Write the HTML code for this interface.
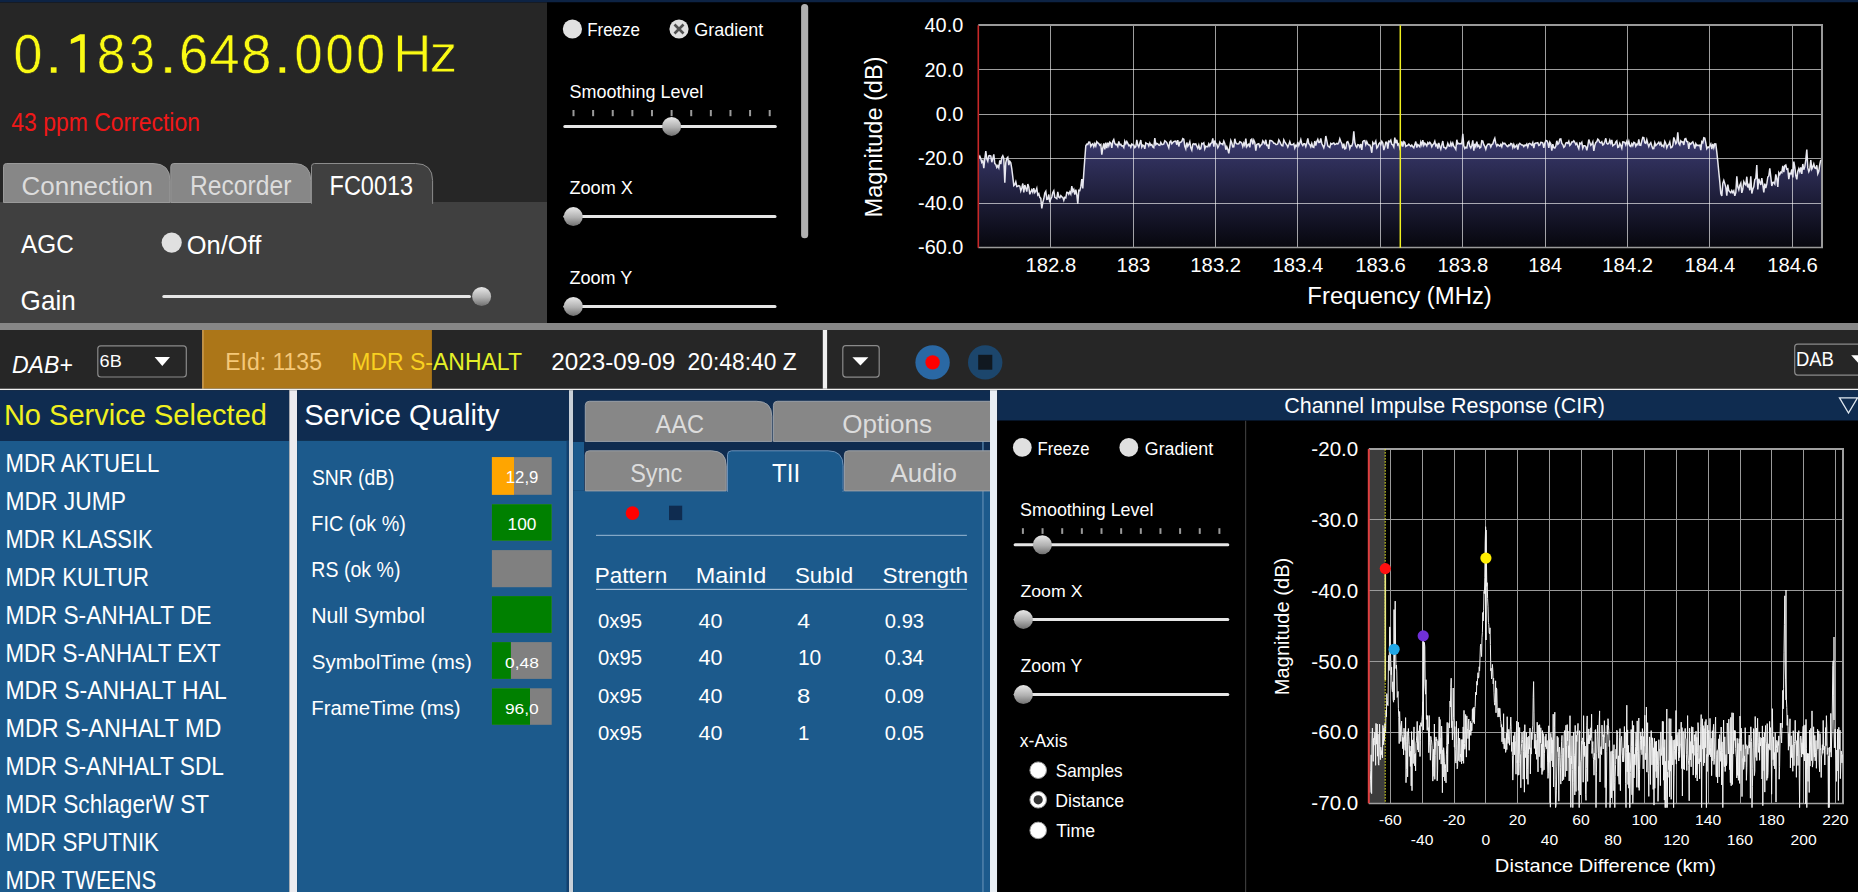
<!DOCTYPE html>
<html><head><meta charset="utf-8"><style>
html,body{margin:0;padding:0;background:#000;overflow:hidden}
svg{display:block;font-family:"Liberation Sans",sans-serif}
</style></head><body>
<svg width="1858" height="892" viewBox="0 0 1858 892">
<defs>
<linearGradient id="thumbg" x1="0" y1="0" x2="0" y2="1">
<stop offset="0" stop-color="#e8e8e8"/><stop offset="0.55" stop-color="#b0b0b0"/><stop offset="1" stop-color="#707070"/>
</linearGradient>
<linearGradient id="specg" gradientUnits="userSpaceOnUse" x1="0" y1="130" x2="0" y2="247">
<stop offset="0" stop-color="#3e3e76"/><stop offset="1" stop-color="#07070e"/>
</linearGradient>
<clipPath id="orclip"><rect x="200" y="330" width="231.9" height="60"/></clipPath>
<clipPath id="orclip2"><rect x="431.9" y="330" width="200" height="60"/></clipPath>
<clipPath id="tabclip"><rect x="573" y="390" width="417" height="200"/></clipPath>
</defs>
<rect x="0.00" y="0.00" width="1858.00" height="892.00" fill="#000000" />
<rect x="0.00" y="0.00" width="1858.00" height="2.50" fill="#0d2344" />
<rect x="0.00" y="2.50" width="547.00" height="199.50" fill="#262626" />
<rect x="0.00" y="202.00" width="547.00" height="121.00" fill="#404040" />
<path d="M3.5,202.5 L3.5,166.5 Q3.5,163.5 6.5,163.5 L153,163.5 Q170,163.5 170,180.5 L170,202.5 Z" fill="#878787" stroke="#9a9a9a" stroke-width="1" />
<path d="M170.8,202.5 L170.8,166.5 Q170.8,163.5 173.8,163.5 L293.8,163.5 Q310.8,163.5 310.8,180.5 L310.8,202.5 Z" fill="#878787" stroke="#9a9a9a" stroke-width="1" />
<path d="M311.5,203.5 L311.5,166.5 Q311.5,163.5 314.5,163.5 L415.6,163.5 Q432.6,163.5 432.6,180.5 L432.6,203.5 Z" fill="#404040" stroke="#8c8c8c" stroke-width="1" />
<rect x="312.00" y="201.50" width="120.10" height="3.50" fill="#404040" />
<rect x="547.00" y="2.50" width="1311.00" height="320.50" fill="#000000" />
<rect x="0.00" y="323.00" width="1858.00" height="7.00" fill="#878787" />
<rect x="0.00" y="330.00" width="1858.00" height="58.70" fill="#262626" />
<rect x="202.30" y="330.00" width="229.60" height="58.70" fill="#ac7618" />
<rect x="202.30" y="330.00" width="1.20" height="58.70" fill="#d8a860" />
<rect x="0.00" y="388.70" width="1858.00" height="1.50" fill="#f0f0f0" />
<rect x="0.00" y="390.20" width="289.30" height="50.80" fill="#0f2c50" />
<rect x="0.00" y="441.00" width="289.30" height="451.00" fill="#1c5a8c" />
<rect x="289.30" y="390.20" width="7.80" height="501.80" fill="#ececf0" />
<rect x="297.10" y="390.20" width="271.90" height="50.40" fill="#0f2c50" />
<rect x="297.10" y="440.60" width="271.90" height="451.40" fill="#1c5a8c" />
<rect x="566.50" y="440.60" width="2.50" height="451.40" fill="#12406e" />
<rect x="569.00" y="390.20" width="4.20" height="501.80" fill="#c8d0d8" />
<rect x="573.20" y="390.20" width="416.80" height="501.80" fill="#0f2c50" />
<rect x="573.20" y="490.70" width="416.80" height="401.30" fill="#1c5a8c" />
<rect x="573.20" y="442.00" width="10.80" height="48.70" fill="#1c5a8c" />
<rect x="982.30" y="440.00" width="1.30" height="452.00" fill="#5a88b0" />
<rect x="990.00" y="390.20" width="7.20" height="501.80" fill="#e8eef4" />
<rect x="997.20" y="390.20" width="860.80" height="30.50" fill="#0f2c50" />
<rect x="997.20" y="420.70" width="860.80" height="471.30" fill="#000000" />
<rect x="1245.00" y="420.70" width="1.20" height="471.30" fill="#3a3a3a" />
<path d="M80.1,34.2 L84.8,34.2 L84.8,72.6 L80.1,72.6 L80.1,40.6 L70.8,43.9 L70.8,39.4 Z" fill="#fafa14" stroke="none" stroke-width="1" />
<text stroke="#262626" stroke-width="0.55" x="13.43" y="72.90" font-size="55.60" fill="#fafa14" textLength="28.85" lengthAdjust="spacingAndGlyphs">0</text>
<text stroke="#262626" stroke-width="0.55" x="44.28" y="72.90" font-size="55.60" fill="#fafa14" textLength="18.89" lengthAdjust="spacingAndGlyphs">.</text>
<text stroke="#262626" stroke-width="0.55" x="96.84" y="72.90" font-size="55.60" fill="#fafa14" textLength="28.63" lengthAdjust="spacingAndGlyphs">8</text>
<text stroke="#262626" stroke-width="0.55" x="129.37" y="72.90" font-size="55.60" fill="#fafa14" textLength="25.44" lengthAdjust="spacingAndGlyphs">3</text>
<text stroke="#262626" stroke-width="0.55" x="158.77" y="72.90" font-size="55.60" fill="#fafa14" textLength="18.61" lengthAdjust="spacingAndGlyphs">.</text>
<text stroke="#262626" stroke-width="0.55" x="178.97" y="72.90" font-size="55.60" fill="#fafa14" textLength="29.26" lengthAdjust="spacingAndGlyphs">6</text>
<text stroke="#262626" stroke-width="0.55" x="209.42" y="72.90" font-size="55.60" fill="#fafa14" textLength="30.09" lengthAdjust="spacingAndGlyphs">4</text>
<text stroke="#262626" stroke-width="0.55" x="241.23" y="72.90" font-size="55.60" fill="#fafa14" textLength="30.17" lengthAdjust="spacingAndGlyphs">8</text>
<text stroke="#262626" stroke-width="0.55" x="272.97" y="72.90" font-size="55.60" fill="#fafa14" textLength="18.61" lengthAdjust="spacingAndGlyphs">.</text>
<text stroke="#262626" stroke-width="0.55" x="294.48" y="72.90" font-size="55.60" fill="#fafa14" textLength="28.04" lengthAdjust="spacingAndGlyphs">0</text>
<text stroke="#262626" stroke-width="0.55" x="325.38" y="72.90" font-size="55.60" fill="#fafa14" textLength="28.15" lengthAdjust="spacingAndGlyphs">0</text>
<text stroke="#262626" stroke-width="0.55" x="356.32" y="72.90" font-size="55.60" fill="#fafa14" textLength="28.85" lengthAdjust="spacingAndGlyphs">0</text>
<text stroke="#262626" stroke-width="0.8" x="393.17" y="72.20" font-size="54.20" fill="#fafa14" textLength="38.17" lengthAdjust="spacingAndGlyphs">H</text>
<text stroke="#262626" stroke-width="0.8" x="429.47" y="72.20" font-size="54.30" fill="#fafa14" textLength="27.93" lengthAdjust="spacingAndGlyphs">z</text>
<text x="11.24" y="131.40" font-size="24.93" fill="#f01818" textLength="188.76" lengthAdjust="spacingAndGlyphs">43 ppm Correction</text>
<text x="21.50" y="195.00" font-size="25.94" fill="#dcdcdc" textLength="131.38" lengthAdjust="spacingAndGlyphs">Connection</text>
<text x="190.03" y="195.00" font-size="26.81" fill="#dcdcdc" textLength="101.38" lengthAdjust="spacingAndGlyphs">Recorder</text>
<text x="329.52" y="195.00" font-size="26.81" fill="#ffffff" textLength="83.70" lengthAdjust="spacingAndGlyphs">FC0013</text>
<text x="21.10" y="252.90" font-size="26.67" fill="#ffffff" textLength="52.64" lengthAdjust="spacingAndGlyphs">AGC</text>
<circle cx="171.70" cy="242.60" r="10.10" fill="#e0e0e0" />
<text x="186.83" y="254.00" font-size="25.94" fill="#ffffff" textLength="74.50" lengthAdjust="spacingAndGlyphs">On/Off</text>
<text x="20.59" y="310.20" font-size="27.10" fill="#ffffff" textLength="55.13" lengthAdjust="spacingAndGlyphs">Gain</text>
<rect x="162.30" y="295.00" width="308.70" height="3.00" fill="#e6e6e6" rx="1.5"/>
<circle cx="481.60" cy="296.50" r="9.50" fill="url(#thumbg)" />
<circle cx="572.40" cy="29.00" r="9.60" fill="#e0e0e0" />
<text x="587.14" y="36.10" font-size="18.70" fill="#ffffff" textLength="52.77" lengthAdjust="spacingAndGlyphs">Freeze</text>
<circle cx="679.00" cy="29.00" r="9.60" fill="#e0e0e0" />
<path d="M674.5,24.5 L683.5,33.5 M683.5,24.5 L674.5,33.5" fill="none" stroke="#505050" stroke-width="2.6" />
<text x="694.30" y="36.10" font-size="18.70" fill="#ffffff" textLength="68.99" lengthAdjust="spacingAndGlyphs">Gradient</text>
<rect x="801.10" y="3.90" width="7.10" height="234.30" fill="#b0b0b0" rx="3.5"/>
<text x="569.50" y="98.10" font-size="18.26" fill="#ffffff" textLength="133.85" lengthAdjust="spacingAndGlyphs">Smoothing Level</text>
<rect x="563.30" y="124.90" width="213.50" height="3.00" fill="#e6e6e6" rx="1.5"/>
<rect x="572.50" y="110.00" width="2.00" height="6.20" fill="#9a9a9a" />
<rect x="592.12" y="110.00" width="2.00" height="6.20" fill="#9a9a9a" />
<rect x="611.74" y="110.00" width="2.00" height="6.20" fill="#9a9a9a" />
<rect x="631.36" y="110.00" width="2.00" height="6.20" fill="#9a9a9a" />
<rect x="650.98" y="110.00" width="2.00" height="6.20" fill="#9a9a9a" />
<rect x="670.60" y="110.00" width="2.00" height="6.20" fill="#9a9a9a" />
<rect x="690.22" y="110.00" width="2.00" height="6.20" fill="#9a9a9a" />
<rect x="709.84" y="110.00" width="2.00" height="6.20" fill="#9a9a9a" />
<rect x="729.46" y="110.00" width="2.00" height="6.20" fill="#9a9a9a" />
<rect x="749.08" y="110.00" width="2.00" height="6.20" fill="#9a9a9a" />
<rect x="768.70" y="110.00" width="2.00" height="6.20" fill="#9a9a9a" />
<circle cx="671.60" cy="126.40" r="9.50" fill="url(#thumbg)" />
<text x="569.46" y="193.90" font-size="18.26" fill="#ffffff" textLength="63.40" lengthAdjust="spacingAndGlyphs">Zoom X</text>
<rect x="563.30" y="215.10" width="213.20" height="3.00" fill="#e6e6e6" rx="1.5"/>
<circle cx="573.30" cy="216.60" r="9.50" fill="url(#thumbg)" />
<text x="569.46" y="283.90" font-size="17.97" fill="#ffffff" textLength="62.95" lengthAdjust="spacingAndGlyphs">Zoom Y</text>
<rect x="563.30" y="304.90" width="213.20" height="3.00" fill="#e6e6e6" rx="1.5"/>
<circle cx="573.30" cy="306.40" r="9.50" fill="url(#thumbg)" />
<path d="M978.3,247.8 L978.8,157.7 979.8,156.2 980.8,158.8 981.8,162.3 982.8,160.7 983.8,168.2 984.8,158.8 985.8,151.0 986.8,158.9 987.8,161.2 988.8,155.8 989.8,155.5 990.8,156.0 991.8,162.2 992.8,158.6 993.8,154.3 994.8,163.7 995.8,164.5 996.8,167.4 997.8,165.7 998.8,167.9 999.8,160.4 1000.8,164.1 1001.8,157.5 1002.8,155.7 1003.8,158.5 1004.8,182.8 1005.8,162.5 1006.8,158.4 1007.8,157.2 1008.8,165.1 1009.8,161.4 1010.8,162.9 1011.8,168.9 1012.8,177.0 1013.8,185.7 1014.8,184.7 1015.8,181.8 1016.8,186.5 1017.8,186.3 1018.8,185.7 1019.8,186.2 1020.8,190.9 1021.8,187.9 1022.8,183.5 1023.8,192.5 1024.8,185.0 1025.8,188.3 1026.8,191.6 1027.8,184.0 1028.8,186.9 1029.8,194.3 1030.8,191.7 1031.8,189.7 1032.8,192.3 1033.8,188.2 1034.8,192.5 1035.8,190.9 1036.8,188.3 1037.8,195.0 1038.8,193.7 1039.8,197.4 1040.8,198.4 1041.8,208.5 1042.8,202.4 1043.8,198.8 1044.8,193.1 1045.8,191.4 1046.8,199.4 1047.8,199.2 1048.8,194.5 1049.8,202.3 1050.8,198.9 1051.8,197.0 1052.8,192.5 1053.8,190.7 1054.8,197.3 1055.8,198.0 1056.8,198.7 1057.8,191.9 1058.8,197.1 1059.8,197.8 1060.8,195.7 1061.8,196.8 1062.8,197.3 1063.8,200.3 1064.8,197.3 1065.8,197.9 1066.8,192.3 1067.8,192.4 1068.8,194.2 1069.8,191.8 1070.8,194.0 1071.8,186.2 1072.8,191.4 1073.8,189.5 1074.8,194.5 1075.8,189.7 1076.8,194.7 1077.8,203.8 1078.8,190.3 1079.8,190.6 1080.8,186.9 1081.8,179.0 1082.8,188.4 1083.8,172.7 1084.8,158.8 1085.8,145.8 1086.8,144.1 1087.8,144.5 1088.8,142.1 1089.8,142.2 1090.8,146.4 1091.8,144.6 1092.8,143.8 1093.8,146.7 1094.8,143.7 1095.8,146.0 1096.8,141.7 1097.8,142.9 1098.8,143.6 1099.8,145.4 1100.8,144.5 1101.8,154.6 1102.8,147.8 1103.8,143.5 1104.8,149.4 1105.8,142.6 1106.8,148.1 1107.8,142.7 1108.8,145.8 1109.8,142.2 1110.8,143.2 1111.8,147.9 1112.8,141.3 1113.8,139.5 1114.8,143.4 1115.8,144.6 1116.8,144.4 1117.8,146.5 1118.8,141.4 1119.8,144.8 1120.8,144.3 1121.8,146.0 1122.8,145.9 1123.8,147.6 1124.8,141.2 1125.8,143.7 1126.8,141.4 1127.8,143.4 1128.8,145.7 1129.8,145.1 1130.8,147.2 1131.8,144.1 1132.8,144.9 1133.8,144.9 1134.8,147.7 1135.8,146.7 1136.8,139.9 1137.8,144.9 1138.8,147.0 1139.8,143.5 1140.8,140.0 1141.8,147.1 1142.8,145.1 1143.8,145.7 1144.8,148.9 1145.8,142.8 1146.8,143.6 1147.8,143.7 1148.8,145.9 1149.8,143.0 1150.8,145.1 1151.8,144.5 1152.8,146.9 1153.8,147.6 1154.8,138.0 1155.8,144.6 1156.8,143.4 1157.8,143.8 1158.8,145.1 1159.8,145.4 1160.8,142.5 1161.8,144.4 1162.8,144.4 1163.8,143.9 1164.8,140.8 1165.8,141.5 1166.8,142.6 1167.8,145.2 1168.8,147.8 1169.8,142.0 1170.8,140.9 1171.8,143.8 1172.8,142.5 1173.8,141.6 1174.8,141.3 1175.8,141.1 1176.8,144.7 1177.8,140.1 1178.8,146.5 1179.8,142.2 1180.8,142.2 1181.8,141.3 1182.8,138.5 1183.8,139.1 1184.8,146.2 1185.8,148.9 1186.8,142.5 1187.8,146.2 1188.8,144.4 1189.8,141.7 1190.8,147.9 1191.8,150.2 1192.8,144.2 1193.8,143.7 1194.8,144.5 1195.8,143.9 1196.8,146.2 1197.8,148.3 1198.8,145.0 1199.8,149.2 1200.8,148.7 1201.8,143.3 1202.8,143.8 1203.8,142.8 1204.8,148.8 1205.8,146.1 1206.8,146.8 1207.8,146.7 1208.8,143.8 1209.8,145.9 1210.8,143.3 1211.8,142.8 1212.8,138.4 1213.8,146.6 1214.8,140.5 1215.8,143.7 1216.8,144.0 1217.8,147.7 1218.8,145.8 1219.8,142.1 1220.8,143.8 1221.8,143.7 1222.8,144.6 1223.8,141.0 1224.8,143.4 1225.8,149.7 1226.8,146.8 1227.8,149.4 1228.8,153.4 1229.8,146.8 1230.8,140.6 1231.8,143.1 1232.8,147.0 1233.8,146.9 1234.8,138.8 1235.8,142.9 1236.8,143.7 1237.8,144.0 1238.8,143.8 1239.8,141.7 1240.8,142.1 1241.8,143.1 1242.8,146.6 1243.8,143.0 1244.8,145.5 1245.8,138.7 1246.8,146.7 1247.8,144.9 1248.8,144.0 1249.8,147.4 1250.8,140.0 1251.8,139.2 1252.8,144.4 1253.8,140.2 1254.8,142.5 1255.8,150.6 1256.8,144.5 1257.8,143.9 1258.8,143.7 1259.8,146.7 1260.8,145.1 1261.8,144.5 1262.8,140.8 1263.8,142.5 1264.8,143.8 1265.8,139.8 1266.8,145.4 1267.8,145.2 1268.8,148.9 1269.8,140.6 1270.8,140.6 1271.8,141.0 1272.8,141.7 1273.8,143.3 1274.8,143.3 1275.8,144.5 1276.8,144.5 1277.8,143.8 1278.8,139.9 1279.8,141.7 1280.8,143.8 1281.8,145.5 1282.8,145.8 1283.8,139.9 1284.8,141.8 1285.8,143.5 1286.8,144.8 1287.8,147.0 1288.8,144.6 1289.8,141.6 1290.8,144.5 1291.8,144.7 1292.8,144.6 1293.8,143.7 1294.8,148.1 1295.8,145.3 1296.8,146.3 1297.8,141.9 1298.8,145.5 1299.8,142.7 1300.8,139.6 1301.8,144.0 1302.8,145.6 1303.8,143.7 1304.8,143.8 1305.8,146.5 1306.8,143.1 1307.8,138.3 1308.8,143.6 1309.8,144.6 1310.8,146.8 1311.8,143.5 1312.8,147.0 1313.8,147.4 1314.8,141.0 1315.8,145.7 1316.8,141.5 1317.8,139.4 1318.8,142.5 1319.8,142.3 1320.8,138.5 1321.8,143.5 1322.8,145.6 1323.8,147.8 1324.8,144.4 1325.8,136.0 1326.8,140.7 1327.8,145.9 1328.8,146.6 1329.8,147.4 1330.8,143.4 1331.8,144.3 1332.8,143.4 1333.8,143.0 1334.8,144.5 1335.8,144.1 1336.8,143.4 1337.8,144.0 1338.8,142.6 1339.8,138.7 1340.8,141.5 1341.8,143.5 1342.8,148.3 1343.8,143.7 1344.8,148.9 1345.8,148.5 1346.8,142.3 1347.8,141.6 1348.8,144.0 1349.8,148.5 1350.8,145.7 1351.8,145.9 1352.8,142.5 1353.8,131.3 1354.8,142.3 1355.8,145.9 1356.8,147.4 1357.8,144.6 1358.8,144.9 1359.8,147.0 1360.8,144.1 1361.8,149.9 1362.8,141.5 1363.8,140.6 1364.8,140.5 1365.8,144.6 1366.8,141.6 1367.8,144.0 1368.8,145.0 1369.8,145.0 1370.8,147.5 1371.8,152.8 1372.8,142.5 1373.8,144.0 1374.8,143.4 1375.8,141.1 1376.8,148.0 1377.8,146.8 1378.8,143.8 1379.8,142.8 1380.8,144.7 1381.8,141.3 1382.8,142.9 1383.8,150.1 1384.8,146.9 1385.8,142.2 1386.8,142.3 1387.8,148.7 1388.8,141.2 1389.8,141.7 1390.8,140.1 1391.8,144.3 1392.8,144.9 1393.8,147.0 1394.8,137.7 1395.8,143.2 1396.8,139.8 1397.8,144.9 1398.8,143.8 1399.8,148.2 1400.8,145.7 1401.8,141.5 1402.8,146.7 1403.8,141.6 1404.8,142.5 1405.8,146.5 1406.8,145.7 1407.8,145.3 1408.8,144.2 1409.8,145.3 1410.8,146.3 1411.8,145.1 1412.8,146.8 1413.8,147.8 1414.8,144.6 1415.8,141.6 1416.8,147.5 1417.8,144.6 1418.8,145.6 1419.8,146.8 1420.8,142.1 1421.8,144.9 1422.8,140.2 1423.8,145.3 1424.8,143.2 1425.8,144.3 1426.8,146.0 1427.8,142.7 1428.8,144.0 1429.8,142.4 1430.8,143.7 1431.8,146.8 1432.8,144.7 1433.8,143.8 1434.8,141.3 1435.8,145.8 1436.8,144.4 1437.8,148.5 1438.8,143.0 1439.8,146.5 1440.8,149.2 1441.8,144.9 1442.8,141.0 1443.8,147.4 1444.8,147.5 1445.8,148.8 1446.8,147.2 1447.8,143.4 1448.8,145.9 1449.8,146.2 1450.8,142.7 1451.8,145.6 1452.8,143.1 1453.8,146.3 1454.8,147.6 1455.8,149.3 1456.8,139.8 1457.8,143.9 1458.8,143.4 1459.8,143.9 1460.8,143.5 1461.8,143.7 1462.8,133.7 1463.8,145.8 1464.8,148.5 1465.8,147.3 1466.8,147.9 1467.8,142.5 1468.8,141.4 1469.8,146.1 1470.8,148.0 1471.8,145.5 1472.8,140.4 1473.8,150.7 1474.8,143.8 1475.8,146.5 1476.8,141.6 1477.8,146.3 1478.8,145.2 1479.8,148.0 1480.8,147.2 1481.8,140.7 1482.8,141.1 1483.8,144.6 1484.8,146.4 1485.8,149.3 1486.8,145.8 1487.8,144.2 1488.8,144.1 1489.8,144.2 1490.8,146.9 1491.8,144.6 1492.8,144.0 1493.8,140.5 1494.8,138.3 1495.8,143.4 1496.8,146.0 1497.8,144.4 1498.8,145.5 1499.8,146.1 1500.8,144.4 1501.8,146.7 1502.8,142.8 1503.8,143.9 1504.8,143.3 1505.8,144.6 1506.8,145.9 1507.8,146.7 1508.8,145.0 1509.8,145.5 1510.8,143.5 1511.8,143.8 1512.8,147.5 1513.8,144.4 1514.8,147.4 1515.8,146.2 1516.8,145.0 1517.8,149.5 1518.8,144.6 1519.8,143.4 1520.8,144.2 1521.8,145.1 1522.8,145.1 1523.8,146.7 1524.8,145.1 1525.8,145.5 1526.8,143.9 1527.8,147.0 1528.8,143.8 1529.8,143.4 1530.8,144.2 1531.8,145.1 1532.8,142.6 1533.8,148.0 1534.8,143.5 1535.8,143.0 1536.8,143.0 1537.8,142.7 1538.8,145.4 1539.8,144.9 1540.8,142.3 1541.8,142.5 1542.8,143.1 1543.8,147.8 1544.8,143.2 1545.8,140.5 1546.8,140.7 1547.8,142.8 1548.8,147.9 1549.8,142.1 1550.8,143.8 1551.8,150.7 1552.8,144.1 1553.8,147.7 1554.8,148.0 1555.8,146.2 1556.8,140.8 1557.8,144.3 1558.8,143.3 1559.8,139.1 1560.8,138.9 1561.8,143.4 1562.8,144.6 1563.8,147.3 1564.8,146.3 1565.8,143.1 1566.8,142.6 1567.8,143.4 1568.8,141.2 1569.8,145.5 1570.8,144.4 1571.8,142.0 1572.8,142.0 1573.8,140.8 1574.8,142.3 1575.8,144.5 1576.8,143.1 1577.8,146.4 1578.8,148.7 1579.8,143.1 1580.8,143.8 1581.8,142.3 1582.8,148.2 1583.8,145.7 1584.8,145.7 1585.8,146.5 1586.8,150.3 1587.8,145.8 1588.8,139.5 1589.8,142.5 1590.8,145.3 1591.8,144.2 1592.8,141.9 1593.8,150.8 1594.8,145.5 1595.8,142.5 1596.8,141.8 1597.8,139.1 1598.8,140.1 1599.8,142.5 1600.8,142.9 1601.8,141.7 1602.8,145.0 1603.8,144.3 1604.8,141.5 1605.8,138.3 1606.8,143.4 1607.8,144.1 1608.8,143.4 1609.8,140.2 1610.8,143.3 1611.8,140.0 1612.8,145.8 1613.8,144.8 1614.8,144.5 1615.8,141.9 1616.8,140.8 1617.8,147.4 1618.8,147.0 1619.8,143.4 1620.8,145.5 1621.8,148.2 1622.8,141.9 1623.8,142.1 1624.8,142.4 1625.8,144.9 1626.8,141.4 1627.8,144.2 1628.8,141.1 1629.8,145.8 1630.8,146.6 1631.8,143.7 1632.8,145.7 1633.8,142.4 1634.8,142.9 1635.8,146.2 1636.8,144.1 1637.8,144.8 1638.8,139.4 1639.8,145.1 1640.8,145.4 1641.8,140.9 1642.8,137.4 1643.8,137.6 1644.8,142.8 1645.8,143.3 1646.8,139.7 1647.8,143.5 1648.8,146.5 1649.8,144.0 1650.8,142.6 1651.8,145.9 1652.8,148.6 1653.8,148.5 1654.8,142.8 1655.8,145.6 1656.8,144.6 1657.8,143.4 1658.8,142.2 1659.8,144.5 1660.8,142.7 1661.8,146.0 1662.8,145.3 1663.8,146.8 1664.8,141.4 1665.8,143.4 1666.8,147.8 1667.8,145.2 1668.8,144.6 1669.8,142.1 1670.8,147.8 1671.8,147.4 1672.8,145.4 1673.8,137.4 1674.8,140.2 1675.8,143.7 1676.8,142.1 1677.8,132.3 1678.8,143.6 1679.8,145.0 1680.8,140.9 1681.8,142.0 1682.8,141.9 1683.8,144.9 1684.8,139.0 1685.8,138.5 1686.8,141.6 1687.8,141.8 1688.8,148.9 1689.8,143.2 1690.8,144.1 1691.8,142.8 1692.8,141.9 1693.8,144.5 1694.8,148.5 1695.8,143.7 1696.8,145.7 1697.8,145.1 1698.8,145.6 1699.8,145.1 1700.8,150.2 1701.8,141.7 1702.8,142.7 1703.8,137.8 1704.8,138.1 1705.8,142.9 1706.8,148.7 1707.8,147.1 1708.8,147.5 1709.8,145.8 1710.8,143.9 1711.8,149.2 1712.8,143.9 1713.8,147.7 1714.8,143.8 1715.8,144.0 1716.8,152.2 1717.8,161.5 1718.8,172.0 1719.8,181.9 1720.8,193.6 1721.8,196.0 1722.8,183.3 1723.8,180.4 1724.8,183.6 1725.8,187.4 1726.8,195.6 1727.8,184.6 1728.8,190.6 1729.8,191.8 1730.8,192.8 1731.8,190.5 1732.8,192.7 1733.8,190.9 1734.8,195.9 1735.8,192.6 1736.8,176.4 1737.8,186.8 1738.8,189.7 1739.8,185.2 1740.8,183.1 1741.8,192.9 1742.8,189.2 1743.8,181.6 1744.8,183.8 1745.8,185.0 1746.8,176.7 1747.8,187.5 1748.8,185.1 1749.8,190.3 1750.8,176.3 1751.8,193.5 1752.8,189.3 1753.8,186.9 1754.8,179.6 1755.8,178.4 1756.8,165.1 1757.8,189.4 1758.8,178.8 1759.8,182.1 1760.8,184.9 1761.8,178.1 1762.8,184.8 1763.8,192.5 1764.8,183.6 1765.8,188.0 1766.8,183.9 1767.8,177.0 1768.8,175.9 1769.8,168.4 1770.8,176.9 1771.8,186.0 1772.8,182.5 1773.8,182.3 1774.8,183.9 1775.8,174.4 1776.8,178.6 1777.8,186.9 1778.8,172.7 1779.8,174.3 1780.8,172.1 1781.8,172.7 1782.8,165.9 1783.8,172.1 1784.8,165.6 1785.8,165.0 1786.8,169.3 1787.8,168.9 1788.8,179.1 1789.8,173.3 1790.8,173.8 1791.8,169.3 1792.8,177.4 1793.8,161.6 1794.8,167.0 1795.8,175.6 1796.8,179.4 1797.8,171.5 1798.8,168.6 1799.8,171.7 1800.8,167.3 1801.8,173.9 1802.8,164.0 1803.8,169.7 1804.8,166.7 1805.8,159.9 1806.8,149.5 1807.8,167.9 1808.8,171.7 1809.8,169.3 1810.8,160.1 1811.8,169.1 1812.8,167.0 1813.8,164.0 1814.8,168.0 1815.8,168.4 1816.8,165.3 1817.8,173.7 1818.8,171.3 1819.8,164.5 1820.8,159.9 L1822,247.8 Z" fill="url(#specg)"/>
<line x1="978.30" y1="25.50" x2="1822.00" y2="25.50" stroke="#ffffff" stroke-width="1.0" opacity="0.62"/>
<line x1="978.30" y1="69.50" x2="1822.00" y2="69.50" stroke="#ffffff" stroke-width="1.0" opacity="0.62"/>
<line x1="978.30" y1="114.50" x2="1822.00" y2="114.50" stroke="#ffffff" stroke-width="1.0" opacity="0.62"/>
<line x1="978.30" y1="158.50" x2="1822.00" y2="158.50" stroke="#ffffff" stroke-width="1.0" opacity="0.62"/>
<line x1="978.30" y1="203.50" x2="1822.00" y2="203.50" stroke="#ffffff" stroke-width="1.0" opacity="0.62"/>
<line x1="978.30" y1="247.50" x2="1822.00" y2="247.50" stroke="#ffffff" stroke-width="1.0" opacity="0.62"/>
<line x1="1050.50" y1="25.30" x2="1050.50" y2="247.80" stroke="#ffffff" stroke-width="1.0" opacity="0.62"/>
<line x1="1133.50" y1="25.30" x2="1133.50" y2="247.80" stroke="#ffffff" stroke-width="1.0" opacity="0.62"/>
<line x1="1215.50" y1="25.30" x2="1215.50" y2="247.80" stroke="#ffffff" stroke-width="1.0" opacity="0.62"/>
<line x1="1297.50" y1="25.30" x2="1297.50" y2="247.80" stroke="#ffffff" stroke-width="1.0" opacity="0.62"/>
<line x1="1380.50" y1="25.30" x2="1380.50" y2="247.80" stroke="#ffffff" stroke-width="1.0" opacity="0.62"/>
<line x1="1462.50" y1="25.30" x2="1462.50" y2="247.80" stroke="#ffffff" stroke-width="1.0" opacity="0.62"/>
<line x1="1545.50" y1="25.30" x2="1545.50" y2="247.80" stroke="#ffffff" stroke-width="1.0" opacity="0.62"/>
<line x1="1627.50" y1="25.30" x2="1627.50" y2="247.80" stroke="#ffffff" stroke-width="1.0" opacity="0.62"/>
<line x1="1709.50" y1="25.30" x2="1709.50" y2="247.80" stroke="#ffffff" stroke-width="1.0" opacity="0.62"/>
<line x1="1792.50" y1="25.30" x2="1792.50" y2="247.80" stroke="#ffffff" stroke-width="1.0" opacity="0.62"/>
<line x1="978.30" y1="25.00" x2="1823.00" y2="25.00" stroke="#9a9a9a" stroke-width="2" />
<line x1="1822.00" y1="24.00" x2="1822.00" y2="248.00" stroke="#9a9a9a" stroke-width="2" />
<line x1="978.30" y1="247.50" x2="1823.00" y2="247.50" stroke="#9a9a9a" stroke-width="1.5" />
<polyline points="978.8,157.7 979.8,156.2 980.8,158.8 981.8,162.3 982.8,160.7 983.8,168.2 984.8,158.8 985.8,151.0 986.8,158.9 987.8,161.2 988.8,155.8 989.8,155.5 990.8,156.0 991.8,162.2 992.8,158.6 993.8,154.3 994.8,163.7 995.8,164.5 996.8,167.4 997.8,165.7 998.8,167.9 999.8,160.4 1000.8,164.1 1001.8,157.5 1002.8,155.7 1003.8,158.5 1004.8,182.8 1005.8,162.5 1006.8,158.4 1007.8,157.2 1008.8,165.1 1009.8,161.4 1010.8,162.9 1011.8,168.9 1012.8,177.0 1013.8,185.7 1014.8,184.7 1015.8,181.8 1016.8,186.5 1017.8,186.3 1018.8,185.7 1019.8,186.2 1020.8,190.9 1021.8,187.9 1022.8,183.5 1023.8,192.5 1024.8,185.0 1025.8,188.3 1026.8,191.6 1027.8,184.0 1028.8,186.9 1029.8,194.3 1030.8,191.7 1031.8,189.7 1032.8,192.3 1033.8,188.2 1034.8,192.5 1035.8,190.9 1036.8,188.3 1037.8,195.0 1038.8,193.7 1039.8,197.4 1040.8,198.4 1041.8,208.5 1042.8,202.4 1043.8,198.8 1044.8,193.1 1045.8,191.4 1046.8,199.4 1047.8,199.2 1048.8,194.5 1049.8,202.3 1050.8,198.9 1051.8,197.0 1052.8,192.5 1053.8,190.7 1054.8,197.3 1055.8,198.0 1056.8,198.7 1057.8,191.9 1058.8,197.1 1059.8,197.8 1060.8,195.7 1061.8,196.8 1062.8,197.3 1063.8,200.3 1064.8,197.3 1065.8,197.9 1066.8,192.3 1067.8,192.4 1068.8,194.2 1069.8,191.8 1070.8,194.0 1071.8,186.2 1072.8,191.4 1073.8,189.5 1074.8,194.5 1075.8,189.7 1076.8,194.7 1077.8,203.8 1078.8,190.3 1079.8,190.6 1080.8,186.9 1081.8,179.0 1082.8,188.4 1083.8,172.7 1084.8,158.8 1085.8,145.8 1086.8,144.1 1087.8,144.5 1088.8,142.1 1089.8,142.2 1090.8,146.4 1091.8,144.6 1092.8,143.8 1093.8,146.7 1094.8,143.7 1095.8,146.0 1096.8,141.7 1097.8,142.9 1098.8,143.6 1099.8,145.4 1100.8,144.5 1101.8,154.6 1102.8,147.8 1103.8,143.5 1104.8,149.4 1105.8,142.6 1106.8,148.1 1107.8,142.7 1108.8,145.8 1109.8,142.2 1110.8,143.2 1111.8,147.9 1112.8,141.3 1113.8,139.5 1114.8,143.4 1115.8,144.6 1116.8,144.4 1117.8,146.5 1118.8,141.4 1119.8,144.8 1120.8,144.3 1121.8,146.0 1122.8,145.9 1123.8,147.6 1124.8,141.2 1125.8,143.7 1126.8,141.4 1127.8,143.4 1128.8,145.7 1129.8,145.1 1130.8,147.2 1131.8,144.1 1132.8,144.9 1133.8,144.9 1134.8,147.7 1135.8,146.7 1136.8,139.9 1137.8,144.9 1138.8,147.0 1139.8,143.5 1140.8,140.0 1141.8,147.1 1142.8,145.1 1143.8,145.7 1144.8,148.9 1145.8,142.8 1146.8,143.6 1147.8,143.7 1148.8,145.9 1149.8,143.0 1150.8,145.1 1151.8,144.5 1152.8,146.9 1153.8,147.6 1154.8,138.0 1155.8,144.6 1156.8,143.4 1157.8,143.8 1158.8,145.1 1159.8,145.4 1160.8,142.5 1161.8,144.4 1162.8,144.4 1163.8,143.9 1164.8,140.8 1165.8,141.5 1166.8,142.6 1167.8,145.2 1168.8,147.8 1169.8,142.0 1170.8,140.9 1171.8,143.8 1172.8,142.5 1173.8,141.6 1174.8,141.3 1175.8,141.1 1176.8,144.7 1177.8,140.1 1178.8,146.5 1179.8,142.2 1180.8,142.2 1181.8,141.3 1182.8,138.5 1183.8,139.1 1184.8,146.2 1185.8,148.9 1186.8,142.5 1187.8,146.2 1188.8,144.4 1189.8,141.7 1190.8,147.9 1191.8,150.2 1192.8,144.2 1193.8,143.7 1194.8,144.5 1195.8,143.9 1196.8,146.2 1197.8,148.3 1198.8,145.0 1199.8,149.2 1200.8,148.7 1201.8,143.3 1202.8,143.8 1203.8,142.8 1204.8,148.8 1205.8,146.1 1206.8,146.8 1207.8,146.7 1208.8,143.8 1209.8,145.9 1210.8,143.3 1211.8,142.8 1212.8,138.4 1213.8,146.6 1214.8,140.5 1215.8,143.7 1216.8,144.0 1217.8,147.7 1218.8,145.8 1219.8,142.1 1220.8,143.8 1221.8,143.7 1222.8,144.6 1223.8,141.0 1224.8,143.4 1225.8,149.7 1226.8,146.8 1227.8,149.4 1228.8,153.4 1229.8,146.8 1230.8,140.6 1231.8,143.1 1232.8,147.0 1233.8,146.9 1234.8,138.8 1235.8,142.9 1236.8,143.7 1237.8,144.0 1238.8,143.8 1239.8,141.7 1240.8,142.1 1241.8,143.1 1242.8,146.6 1243.8,143.0 1244.8,145.5 1245.8,138.7 1246.8,146.7 1247.8,144.9 1248.8,144.0 1249.8,147.4 1250.8,140.0 1251.8,139.2 1252.8,144.4 1253.8,140.2 1254.8,142.5 1255.8,150.6 1256.8,144.5 1257.8,143.9 1258.8,143.7 1259.8,146.7 1260.8,145.1 1261.8,144.5 1262.8,140.8 1263.8,142.5 1264.8,143.8 1265.8,139.8 1266.8,145.4 1267.8,145.2 1268.8,148.9 1269.8,140.6 1270.8,140.6 1271.8,141.0 1272.8,141.7 1273.8,143.3 1274.8,143.3 1275.8,144.5 1276.8,144.5 1277.8,143.8 1278.8,139.9 1279.8,141.7 1280.8,143.8 1281.8,145.5 1282.8,145.8 1283.8,139.9 1284.8,141.8 1285.8,143.5 1286.8,144.8 1287.8,147.0 1288.8,144.6 1289.8,141.6 1290.8,144.5 1291.8,144.7 1292.8,144.6 1293.8,143.7 1294.8,148.1 1295.8,145.3 1296.8,146.3 1297.8,141.9 1298.8,145.5 1299.8,142.7 1300.8,139.6 1301.8,144.0 1302.8,145.6 1303.8,143.7 1304.8,143.8 1305.8,146.5 1306.8,143.1 1307.8,138.3 1308.8,143.6 1309.8,144.6 1310.8,146.8 1311.8,143.5 1312.8,147.0 1313.8,147.4 1314.8,141.0 1315.8,145.7 1316.8,141.5 1317.8,139.4 1318.8,142.5 1319.8,142.3 1320.8,138.5 1321.8,143.5 1322.8,145.6 1323.8,147.8 1324.8,144.4 1325.8,136.0 1326.8,140.7 1327.8,145.9 1328.8,146.6 1329.8,147.4 1330.8,143.4 1331.8,144.3 1332.8,143.4 1333.8,143.0 1334.8,144.5 1335.8,144.1 1336.8,143.4 1337.8,144.0 1338.8,142.6 1339.8,138.7 1340.8,141.5 1341.8,143.5 1342.8,148.3 1343.8,143.7 1344.8,148.9 1345.8,148.5 1346.8,142.3 1347.8,141.6 1348.8,144.0 1349.8,148.5 1350.8,145.7 1351.8,145.9 1352.8,142.5 1353.8,131.3 1354.8,142.3 1355.8,145.9 1356.8,147.4 1357.8,144.6 1358.8,144.9 1359.8,147.0 1360.8,144.1 1361.8,149.9 1362.8,141.5 1363.8,140.6 1364.8,140.5 1365.8,144.6 1366.8,141.6 1367.8,144.0 1368.8,145.0 1369.8,145.0 1370.8,147.5 1371.8,152.8 1372.8,142.5 1373.8,144.0 1374.8,143.4 1375.8,141.1 1376.8,148.0 1377.8,146.8 1378.8,143.8 1379.8,142.8 1380.8,144.7 1381.8,141.3 1382.8,142.9 1383.8,150.1 1384.8,146.9 1385.8,142.2 1386.8,142.3 1387.8,148.7 1388.8,141.2 1389.8,141.7 1390.8,140.1 1391.8,144.3 1392.8,144.9 1393.8,147.0 1394.8,137.7 1395.8,143.2 1396.8,139.8 1397.8,144.9 1398.8,143.8 1399.8,148.2 1400.8,145.7 1401.8,141.5 1402.8,146.7 1403.8,141.6 1404.8,142.5 1405.8,146.5 1406.8,145.7 1407.8,145.3 1408.8,144.2 1409.8,145.3 1410.8,146.3 1411.8,145.1 1412.8,146.8 1413.8,147.8 1414.8,144.6 1415.8,141.6 1416.8,147.5 1417.8,144.6 1418.8,145.6 1419.8,146.8 1420.8,142.1 1421.8,144.9 1422.8,140.2 1423.8,145.3 1424.8,143.2 1425.8,144.3 1426.8,146.0 1427.8,142.7 1428.8,144.0 1429.8,142.4 1430.8,143.7 1431.8,146.8 1432.8,144.7 1433.8,143.8 1434.8,141.3 1435.8,145.8 1436.8,144.4 1437.8,148.5 1438.8,143.0 1439.8,146.5 1440.8,149.2 1441.8,144.9 1442.8,141.0 1443.8,147.4 1444.8,147.5 1445.8,148.8 1446.8,147.2 1447.8,143.4 1448.8,145.9 1449.8,146.2 1450.8,142.7 1451.8,145.6 1452.8,143.1 1453.8,146.3 1454.8,147.6 1455.8,149.3 1456.8,139.8 1457.8,143.9 1458.8,143.4 1459.8,143.9 1460.8,143.5 1461.8,143.7 1462.8,133.7 1463.8,145.8 1464.8,148.5 1465.8,147.3 1466.8,147.9 1467.8,142.5 1468.8,141.4 1469.8,146.1 1470.8,148.0 1471.8,145.5 1472.8,140.4 1473.8,150.7 1474.8,143.8 1475.8,146.5 1476.8,141.6 1477.8,146.3 1478.8,145.2 1479.8,148.0 1480.8,147.2 1481.8,140.7 1482.8,141.1 1483.8,144.6 1484.8,146.4 1485.8,149.3 1486.8,145.8 1487.8,144.2 1488.8,144.1 1489.8,144.2 1490.8,146.9 1491.8,144.6 1492.8,144.0 1493.8,140.5 1494.8,138.3 1495.8,143.4 1496.8,146.0 1497.8,144.4 1498.8,145.5 1499.8,146.1 1500.8,144.4 1501.8,146.7 1502.8,142.8 1503.8,143.9 1504.8,143.3 1505.8,144.6 1506.8,145.9 1507.8,146.7 1508.8,145.0 1509.8,145.5 1510.8,143.5 1511.8,143.8 1512.8,147.5 1513.8,144.4 1514.8,147.4 1515.8,146.2 1516.8,145.0 1517.8,149.5 1518.8,144.6 1519.8,143.4 1520.8,144.2 1521.8,145.1 1522.8,145.1 1523.8,146.7 1524.8,145.1 1525.8,145.5 1526.8,143.9 1527.8,147.0 1528.8,143.8 1529.8,143.4 1530.8,144.2 1531.8,145.1 1532.8,142.6 1533.8,148.0 1534.8,143.5 1535.8,143.0 1536.8,143.0 1537.8,142.7 1538.8,145.4 1539.8,144.9 1540.8,142.3 1541.8,142.5 1542.8,143.1 1543.8,147.8 1544.8,143.2 1545.8,140.5 1546.8,140.7 1547.8,142.8 1548.8,147.9 1549.8,142.1 1550.8,143.8 1551.8,150.7 1552.8,144.1 1553.8,147.7 1554.8,148.0 1555.8,146.2 1556.8,140.8 1557.8,144.3 1558.8,143.3 1559.8,139.1 1560.8,138.9 1561.8,143.4 1562.8,144.6 1563.8,147.3 1564.8,146.3 1565.8,143.1 1566.8,142.6 1567.8,143.4 1568.8,141.2 1569.8,145.5 1570.8,144.4 1571.8,142.0 1572.8,142.0 1573.8,140.8 1574.8,142.3 1575.8,144.5 1576.8,143.1 1577.8,146.4 1578.8,148.7 1579.8,143.1 1580.8,143.8 1581.8,142.3 1582.8,148.2 1583.8,145.7 1584.8,145.7 1585.8,146.5 1586.8,150.3 1587.8,145.8 1588.8,139.5 1589.8,142.5 1590.8,145.3 1591.8,144.2 1592.8,141.9 1593.8,150.8 1594.8,145.5 1595.8,142.5 1596.8,141.8 1597.8,139.1 1598.8,140.1 1599.8,142.5 1600.8,142.9 1601.8,141.7 1602.8,145.0 1603.8,144.3 1604.8,141.5 1605.8,138.3 1606.8,143.4 1607.8,144.1 1608.8,143.4 1609.8,140.2 1610.8,143.3 1611.8,140.0 1612.8,145.8 1613.8,144.8 1614.8,144.5 1615.8,141.9 1616.8,140.8 1617.8,147.4 1618.8,147.0 1619.8,143.4 1620.8,145.5 1621.8,148.2 1622.8,141.9 1623.8,142.1 1624.8,142.4 1625.8,144.9 1626.8,141.4 1627.8,144.2 1628.8,141.1 1629.8,145.8 1630.8,146.6 1631.8,143.7 1632.8,145.7 1633.8,142.4 1634.8,142.9 1635.8,146.2 1636.8,144.1 1637.8,144.8 1638.8,139.4 1639.8,145.1 1640.8,145.4 1641.8,140.9 1642.8,137.4 1643.8,137.6 1644.8,142.8 1645.8,143.3 1646.8,139.7 1647.8,143.5 1648.8,146.5 1649.8,144.0 1650.8,142.6 1651.8,145.9 1652.8,148.6 1653.8,148.5 1654.8,142.8 1655.8,145.6 1656.8,144.6 1657.8,143.4 1658.8,142.2 1659.8,144.5 1660.8,142.7 1661.8,146.0 1662.8,145.3 1663.8,146.8 1664.8,141.4 1665.8,143.4 1666.8,147.8 1667.8,145.2 1668.8,144.6 1669.8,142.1 1670.8,147.8 1671.8,147.4 1672.8,145.4 1673.8,137.4 1674.8,140.2 1675.8,143.7 1676.8,142.1 1677.8,132.3 1678.8,143.6 1679.8,145.0 1680.8,140.9 1681.8,142.0 1682.8,141.9 1683.8,144.9 1684.8,139.0 1685.8,138.5 1686.8,141.6 1687.8,141.8 1688.8,148.9 1689.8,143.2 1690.8,144.1 1691.8,142.8 1692.8,141.9 1693.8,144.5 1694.8,148.5 1695.8,143.7 1696.8,145.7 1697.8,145.1 1698.8,145.6 1699.8,145.1 1700.8,150.2 1701.8,141.7 1702.8,142.7 1703.8,137.8 1704.8,138.1 1705.8,142.9 1706.8,148.7 1707.8,147.1 1708.8,147.5 1709.8,145.8 1710.8,143.9 1711.8,149.2 1712.8,143.9 1713.8,147.7 1714.8,143.8 1715.8,144.0 1716.8,152.2 1717.8,161.5 1718.8,172.0 1719.8,181.9 1720.8,193.6 1721.8,196.0 1722.8,183.3 1723.8,180.4 1724.8,183.6 1725.8,187.4 1726.8,195.6 1727.8,184.6 1728.8,190.6 1729.8,191.8 1730.8,192.8 1731.8,190.5 1732.8,192.7 1733.8,190.9 1734.8,195.9 1735.8,192.6 1736.8,176.4 1737.8,186.8 1738.8,189.7 1739.8,185.2 1740.8,183.1 1741.8,192.9 1742.8,189.2 1743.8,181.6 1744.8,183.8 1745.8,185.0 1746.8,176.7 1747.8,187.5 1748.8,185.1 1749.8,190.3 1750.8,176.3 1751.8,193.5 1752.8,189.3 1753.8,186.9 1754.8,179.6 1755.8,178.4 1756.8,165.1 1757.8,189.4 1758.8,178.8 1759.8,182.1 1760.8,184.9 1761.8,178.1 1762.8,184.8 1763.8,192.5 1764.8,183.6 1765.8,188.0 1766.8,183.9 1767.8,177.0 1768.8,175.9 1769.8,168.4 1770.8,176.9 1771.8,186.0 1772.8,182.5 1773.8,182.3 1774.8,183.9 1775.8,174.4 1776.8,178.6 1777.8,186.9 1778.8,172.7 1779.8,174.3 1780.8,172.1 1781.8,172.7 1782.8,165.9 1783.8,172.1 1784.8,165.6 1785.8,165.0 1786.8,169.3 1787.8,168.9 1788.8,179.1 1789.8,173.3 1790.8,173.8 1791.8,169.3 1792.8,177.4 1793.8,161.6 1794.8,167.0 1795.8,175.6 1796.8,179.4 1797.8,171.5 1798.8,168.6 1799.8,171.7 1800.8,167.3 1801.8,173.9 1802.8,164.0 1803.8,169.7 1804.8,166.7 1805.8,159.9 1806.8,149.5 1807.8,167.9 1808.8,171.7 1809.8,169.3 1810.8,160.1 1811.8,169.1 1812.8,167.0 1813.8,164.0 1814.8,168.0 1815.8,168.4 1816.8,165.3 1817.8,173.7 1818.8,171.3 1819.8,164.5 1820.8,159.9" fill="none" stroke="#e8e8f0" stroke-width="1.5"/>
<line x1="1400.30" y1="25.30" x2="1400.30" y2="247.80" stroke="#f0f020" stroke-width="1.5" />
<line x1="978.30" y1="25.30" x2="978.30" y2="247.80" stroke="#c82828" stroke-width="1.6" />
<text x="924.57" y="32.00" font-size="19.86" fill="#ffffff" textLength="38.64" lengthAdjust="spacingAndGlyphs">40.0</text>
<text x="924.57" y="76.50" font-size="19.86" fill="#ffffff" textLength="38.64" lengthAdjust="spacingAndGlyphs">20.0</text>
<text x="935.69" y="120.90" font-size="19.86" fill="#ffffff" textLength="27.60" lengthAdjust="spacingAndGlyphs">0.0</text>
<text x="918.02" y="165.40" font-size="19.86" fill="#ffffff" textLength="45.26" lengthAdjust="spacingAndGlyphs">-20.0</text>
<text x="918.02" y="209.90" font-size="19.86" fill="#ffffff" textLength="45.26" lengthAdjust="spacingAndGlyphs">-40.0</text>
<text x="918.02" y="254.30" font-size="19.86" fill="#ffffff" textLength="45.26" lengthAdjust="spacingAndGlyphs">-60.0</text>
<text x="1025.54" y="271.60" font-size="20.29" fill="#ffffff" textLength="50.76" lengthAdjust="spacingAndGlyphs">182.8</text>
<text x="1116.46" y="271.60" font-size="20.29" fill="#ffffff" textLength="33.84" lengthAdjust="spacingAndGlyphs">183</text>
<text x="1190.34" y="271.60" font-size="20.29" fill="#ffffff" textLength="50.76" lengthAdjust="spacingAndGlyphs">183.2</text>
<text x="1272.54" y="271.60" font-size="20.29" fill="#ffffff" textLength="50.76" lengthAdjust="spacingAndGlyphs">183.4</text>
<text x="1355.14" y="271.60" font-size="20.29" fill="#ffffff" textLength="50.76" lengthAdjust="spacingAndGlyphs">183.6</text>
<text x="1437.54" y="271.60" font-size="20.29" fill="#ffffff" textLength="50.76" lengthAdjust="spacingAndGlyphs">183.8</text>
<text x="1528.26" y="271.60" font-size="20.29" fill="#ffffff" textLength="33.84" lengthAdjust="spacingAndGlyphs">184</text>
<text x="1602.34" y="271.60" font-size="20.29" fill="#ffffff" textLength="50.76" lengthAdjust="spacingAndGlyphs">184.2</text>
<text x="1684.54" y="271.60" font-size="20.29" fill="#ffffff" textLength="50.76" lengthAdjust="spacingAndGlyphs">184.4</text>
<text x="1767.14" y="271.60" font-size="20.29" fill="#ffffff" textLength="50.76" lengthAdjust="spacingAndGlyphs">184.6</text>
<text x="1307.39" y="303.80" font-size="23.48" fill="#ffffff" textLength="184.42" lengthAdjust="spacingAndGlyphs">Frequency (MHz)</text>
<text transform="translate(881.90,217.38) rotate(-90)" x="0" y="0" font-size="24.64" fill="#ffffff" textLength="160.84" lengthAdjust="spacingAndGlyphs">Magnitude (dB)</text>
<text x="11.91" y="372.60" font-size="23.33" font-style="italic" fill="#ffffff" textLength="60.89" lengthAdjust="spacingAndGlyphs">DAB+</text>
<rect x="97.80" y="345.80" width="88.50" height="31.20" fill="none" stroke="#8a8a8a" stroke-width="1.2" rx="3"/>
<text x="99.59" y="367.00" font-size="17.25" fill="#ffffff" textLength="22.19" lengthAdjust="spacingAndGlyphs">6B</text>
<path d="M154.6,356.9 L170,356.9 L162.3,365.9 Z" fill="#ffffff" stroke="none" stroke-width="1" />
<text x="225.26" y="369.70" font-size="24.35" fill="#f5c878" textLength="96.68" lengthAdjust="spacingAndGlyphs">EId: 1135</text>
<g clip-path="url(#orclip)">
<text x="351.26" y="369.70" font-size="24.35" fill="#f8d020" textLength="170.71" lengthAdjust="spacingAndGlyphs">MDR S-ANHALT</text>
</g><g clip-path="url(#orclip2)">
<text x="351.26" y="369.70" font-size="24.35" fill="#e4f028" textLength="170.71" lengthAdjust="spacingAndGlyphs">MDR S-ANHALT</text>
</g>
<text x="551.39" y="369.70" font-size="23.77" fill="#ffffff" textLength="123.79" lengthAdjust="spacingAndGlyphs">2023-09-09</text>
<text x="687.56" y="369.70" font-size="23.77" fill="#ffffff" textLength="109.14" lengthAdjust="spacingAndGlyphs">20:48:40 Z</text>
<rect x="822.80" y="330.00" width="4.30" height="58.70" fill="#f0f0f0" />
<rect x="842.80" y="345.70" width="36.40" height="31.40" fill="none" stroke="#8a8a8a" stroke-width="1.2" rx="3"/>
<path d="M852.4,357.3 L868.4,357.3 L860.4,365.4 Z" fill="#ffffff" stroke="none" stroke-width="1" />
<circle cx="932.60" cy="362.40" r="17.20" fill="#2a68a4" />
<circle cx="932.60" cy="362.40" r="7.20" fill="#ff0000" />
<circle cx="985.20" cy="362.40" r="17.20" fill="#1c466c" />
<rect x="978.20" y="354.80" width="14.10" height="14.90" fill="#101820" />
<rect x="1794.70" y="344.10" width="75.30" height="31.00" fill="none" stroke="#8a8a8a" stroke-width="1.2" rx="3"/>
<text x="1795.92" y="365.70" font-size="19.57" fill="#ffffff" textLength="38.04" lengthAdjust="spacingAndGlyphs">DAB</text>
<path d="M1851.2,355.3 L1866,355.3 L1858.6,363.5 Z" fill="#ffffff" stroke="none" stroke-width="1" />
<text x="3.88" y="424.50" font-size="30.14" fill="#f0f020" textLength="263.05" lengthAdjust="spacingAndGlyphs">No Service Selected</text>
<text x="5.53" y="472.00" font-size="24.93" fill="#ffffff" textLength="153.77" lengthAdjust="spacingAndGlyphs">MDR AKTUELL</text>
<text x="5.47" y="509.90" font-size="24.93" fill="#ffffff" textLength="120.61" lengthAdjust="spacingAndGlyphs">MDR JUMP</text>
<text x="5.55" y="547.80" font-size="24.93" fill="#ffffff" textLength="147.06" lengthAdjust="spacingAndGlyphs">MDR KLASSIK</text>
<text x="5.53" y="585.70" font-size="24.93" fill="#ffffff" textLength="143.61" lengthAdjust="spacingAndGlyphs">MDR KULTUR</text>
<text x="5.48" y="623.60" font-size="24.93" fill="#ffffff" textLength="206.01" lengthAdjust="spacingAndGlyphs">MDR S-ANHALT DE</text>
<text x="5.51" y="661.50" font-size="24.93" fill="#ffffff" textLength="215.25" lengthAdjust="spacingAndGlyphs">MDR S-ANHALT EXT</text>
<text x="5.46" y="699.40" font-size="24.93" fill="#ffffff" textLength="221.36" lengthAdjust="spacingAndGlyphs">MDR S-ANHALT HAL</text>
<text x="5.43" y="737.30" font-size="24.93" fill="#ffffff" textLength="215.83" lengthAdjust="spacingAndGlyphs">MDR S-ANHALT MD</text>
<text x="5.49" y="775.20" font-size="24.93" fill="#ffffff" textLength="218.42" lengthAdjust="spacingAndGlyphs">MDR S-ANHALT SDL</text>
<text x="5.49" y="813.10" font-size="24.93" fill="#ffffff" textLength="203.59" lengthAdjust="spacingAndGlyphs">MDR SchlagerW ST</text>
<text x="5.52" y="851.00" font-size="24.93" fill="#ffffff" textLength="153.41" lengthAdjust="spacingAndGlyphs">MDR SPUTNIK</text>
<text x="5.53" y="888.90" font-size="24.93" fill="#ffffff" textLength="150.66" lengthAdjust="spacingAndGlyphs">MDR TWEENS</text>
<text x="304.15" y="424.90" font-size="29.42" fill="#ffffff" textLength="195.38" lengthAdjust="spacingAndGlyphs">Service Quality</text>
<text x="311.93" y="484.70" font-size="21.88" fill="#ffffff" textLength="82.59" lengthAdjust="spacingAndGlyphs">SNR (dB)</text>
<text x="311.32" y="530.80" font-size="22.17" fill="#ffffff" textLength="94.52" lengthAdjust="spacingAndGlyphs">FIC (ok %)</text>
<text x="311.34" y="577.20" font-size="22.17" fill="#ffffff" textLength="89.06" lengthAdjust="spacingAndGlyphs">RS (ok %)</text>
<text x="311.19" y="623.00" font-size="21.45" fill="#ffffff" textLength="113.89" lengthAdjust="spacingAndGlyphs">Null Symbol</text>
<text x="311.87" y="668.80" font-size="20.58" fill="#ffffff" textLength="159.98" lengthAdjust="spacingAndGlyphs">SymbolTime (ms)</text>
<text x="311.27" y="714.80" font-size="20.58" fill="#ffffff" textLength="149.36" lengthAdjust="spacingAndGlyphs">FrameTime (ms)</text>
<rect x="491.90" y="457.10" width="59.80" height="37.70" fill="#808080" />
<rect x="491.90" y="457.10" width="22.10" height="37.70" fill="#ffa500" />
<text x="505.83" y="483.00" font-size="16.71" fill="#ffffff" textLength="32.54" lengthAdjust="spacingAndGlyphs">12,9</text>
<rect x="491.90" y="504.20" width="59.80" height="36.50" fill="#808080" />
<rect x="491.90" y="504.20" width="59.80" height="36.50" fill="#008000" />
<text x="507.59" y="529.70" font-size="16.14" fill="#ffffff" textLength="28.77" lengthAdjust="spacingAndGlyphs">100</text>
<rect x="491.90" y="550.10" width="59.80" height="37.10" fill="#808080" />
<rect x="491.90" y="550.10" width="0.00" height="37.10" fill="#008000" />
<rect x="491.90" y="596.10" width="59.80" height="36.80" fill="#808080" />
<rect x="491.90" y="596.10" width="59.80" height="36.80" fill="#008000" />
<rect x="491.90" y="642.10" width="59.80" height="36.80" fill="#808080" />
<rect x="491.90" y="642.10" width="19.00" height="36.80" fill="#008000" />
<text x="505.11" y="667.80" font-size="15.29" fill="#ffffff" textLength="33.80" lengthAdjust="spacingAndGlyphs">0,48</text>
<rect x="491.90" y="688.30" width="59.80" height="36.50" fill="#808080" />
<rect x="491.90" y="688.30" width="38.10" height="36.50" fill="#008000" />
<text x="504.93" y="713.50" font-size="15.43" fill="#ffffff" textLength="33.80" lengthAdjust="spacingAndGlyphs">96,0</text>
<g clip-path="url(#tabclip)">
<path d="M585.3,441.4 L585.3,405.3 Q585.3,401.3 589.3,401.3 L756.8,401.3 Q771.8,401.3 771.8,416.3 L771.8,441.4 Z" fill="#878787" stroke="#9aa0a8" stroke-width="1" />
<path d="M773.4,441.4 L773.4,405.3 Q773.4,401.3 777.4,401.3 L995,401.3 Q1010,401.3 1010,416.3 L1010,441.4 Z" fill="#878787" stroke="#9aa0a8" stroke-width="1" />
<path d="M585.3,490.9 L585.3,454.8 Q585.3,450.8 589.3,450.8 L711.2,450.8 Q726.2,450.8 726.2,465.8 L726.2,490.9 Z" fill="#878787" stroke="#9aa0a8" stroke-width="1" />
<path d="M844.4,490.9 L844.4,454.8 Q844.4,450.8 848.4,450.8 L995,450.8 Q1010,450.8 1010,465.8 L1010,490.9 Z" fill="#878787" stroke="#9aa0a8" stroke-width="1" />
<path d="M727.5,491.5 L727.5,454.8 Q727.5,450.8 731.5,450.8 L828.1,450.8 Q843.1,450.8 843.1,465.8 L843.1,491.5 Z" fill="#1c5a8c" stroke="#6a90b8" stroke-width="1" />
<rect x="728.00" y="489.00" width="114.60" height="4.00" fill="#1c5a8c" />
</g>
<text x="655.60" y="432.80" font-size="25.80" fill="#dcdcdc" textLength="48.59" lengthAdjust="spacingAndGlyphs">AAC</text>
<text x="842.19" y="432.80" font-size="25.80" fill="#dcdcdc" textLength="89.99" lengthAdjust="spacingAndGlyphs">Options</text>
<text x="630.13" y="482.10" font-size="26.23" fill="#dcdcdc" textLength="52.15" lengthAdjust="spacingAndGlyphs">Sync</text>
<text x="772.02" y="482.10" font-size="26.23" fill="#ffffff" textLength="28.06" lengthAdjust="spacingAndGlyphs">TII</text>
<text x="890.50" y="482.10" font-size="26.23" fill="#dcdcdc" textLength="66.47" lengthAdjust="spacingAndGlyphs">Audio</text>
<circle cx="632.50" cy="513.10" r="6.80" fill="#ff0000" />
<rect x="669.00" y="505.70" width="13.20" height="14.40" fill="#0f2c50" />
<rect x="596.00" y="534.80" width="370.90" height="1.10" fill="#8fb0cc" />
<text x="594.70" y="583.00" font-size="22.17" fill="#ffffff" textLength="72.64" lengthAdjust="spacingAndGlyphs">Pattern</text>
<text x="695.82" y="583.00" font-size="22.17" fill="#ffffff" textLength="70.41" lengthAdjust="spacingAndGlyphs">MainId</text>
<text x="794.98" y="583.00" font-size="22.17" fill="#ffffff" textLength="58.32" lengthAdjust="spacingAndGlyphs">SubId</text>
<text x="882.57" y="583.00" font-size="22.17" fill="#ffffff" textLength="85.51" lengthAdjust="spacingAndGlyphs">Strength</text>
<rect x="596.00" y="588.80" width="370.90" height="1.20" fill="#a8c0d8" />
<text x="597.99" y="627.70" font-size="20.86" fill="#ffffff" textLength="43.99" lengthAdjust="spacingAndGlyphs">0x95</text>
<text x="698.47" y="627.70" font-size="20.86" fill="#ffffff" textLength="23.92" lengthAdjust="spacingAndGlyphs">40</text>
<text x="797.24" y="627.70" font-size="20.86" fill="#ffffff" textLength="12.87" lengthAdjust="spacingAndGlyphs">4</text>
<text x="884.79" y="627.70" font-size="20.86" fill="#ffffff" textLength="39.34" lengthAdjust="spacingAndGlyphs">0.93</text>
<text x="597.99" y="664.90" font-size="21.29" fill="#ffffff" textLength="43.99" lengthAdjust="spacingAndGlyphs">0x95</text>
<text x="698.47" y="664.90" font-size="21.29" fill="#ffffff" textLength="23.92" lengthAdjust="spacingAndGlyphs">40</text>
<text x="797.93" y="664.90" font-size="21.29" fill="#ffffff" textLength="23.34" lengthAdjust="spacingAndGlyphs">10</text>
<text x="884.80" y="664.90" font-size="21.29" fill="#ffffff" textLength="38.92" lengthAdjust="spacingAndGlyphs">0.34</text>
<text x="597.99" y="702.50" font-size="21.14" fill="#ffffff" textLength="43.99" lengthAdjust="spacingAndGlyphs">0x95</text>
<text x="698.47" y="702.50" font-size="21.14" fill="#ffffff" textLength="23.92" lengthAdjust="spacingAndGlyphs">40</text>
<text x="796.95" y="702.50" font-size="21.14" fill="#ffffff" textLength="13.25" lengthAdjust="spacingAndGlyphs">8</text>
<text x="884.79" y="702.50" font-size="21.14" fill="#ffffff" textLength="39.34" lengthAdjust="spacingAndGlyphs">0.09</text>
<text x="597.99" y="739.50" font-size="21.14" fill="#ffffff" textLength="43.99" lengthAdjust="spacingAndGlyphs">0x95</text>
<text x="698.47" y="739.50" font-size="21.14" fill="#ffffff" textLength="23.92" lengthAdjust="spacingAndGlyphs">40</text>
<text x="798.07" y="739.50" font-size="21.14" fill="#ffffff" textLength="11.37" lengthAdjust="spacingAndGlyphs">1</text>
<text x="884.80" y="739.50" font-size="21.14" fill="#ffffff" textLength="39.13" lengthAdjust="spacingAndGlyphs">0.05</text>
<text x="1284.23" y="412.50" font-size="22.17" fill="#ffffff" textLength="320.57" lengthAdjust="spacingAndGlyphs">Channel Impulse Response (CIR)</text>
<path d="M1839.5,397.8 L1857.5,397.8 L1848.5,413 Z" fill="none" stroke="#e0e8f0" stroke-width="1.3" />
<circle cx="1022.30" cy="447.40" r="9.40" fill="#e0e0e0" />
<text x="1037.56" y="454.50" font-size="17.68" fill="#ffffff" textLength="51.94" lengthAdjust="spacingAndGlyphs">Freeze</text>
<circle cx="1128.80" cy="447.40" r="9.40" fill="#e0e0e0" />
<text x="1144.81" y="454.50" font-size="17.68" fill="#ffffff" textLength="68.28" lengthAdjust="spacingAndGlyphs">Gradient</text>
<text x="1020.10" y="515.90" font-size="17.83" fill="#ffffff" textLength="133.35" lengthAdjust="spacingAndGlyphs">Smoothing Level</text>
<rect x="1013.60" y="543.20" width="215.70" height="3.00" fill="#e6e6e6" rx="1.5"/>
<rect x="1021.90" y="528.20" width="2.00" height="5.70" fill="#9a9a9a" />
<rect x="1041.55" y="528.20" width="2.00" height="5.70" fill="#9a9a9a" />
<rect x="1061.20" y="528.20" width="2.00" height="5.70" fill="#9a9a9a" />
<rect x="1080.85" y="528.20" width="2.00" height="5.70" fill="#9a9a9a" />
<rect x="1100.50" y="528.20" width="2.00" height="5.70" fill="#9a9a9a" />
<rect x="1120.15" y="528.20" width="2.00" height="5.70" fill="#9a9a9a" />
<rect x="1139.80" y="528.20" width="2.00" height="5.70" fill="#9a9a9a" />
<rect x="1159.45" y="528.20" width="2.00" height="5.70" fill="#9a9a9a" />
<rect x="1179.10" y="528.20" width="2.00" height="5.70" fill="#9a9a9a" />
<rect x="1198.75" y="528.20" width="2.00" height="5.70" fill="#9a9a9a" />
<rect x="1218.40" y="528.20" width="2.00" height="5.70" fill="#9a9a9a" />
<circle cx="1042.40" cy="544.70" r="9.50" fill="url(#thumbg)" />
<text x="1020.47" y="597.20" font-size="16.67" fill="#ffffff" textLength="61.98" lengthAdjust="spacingAndGlyphs">Zoom X</text>
<rect x="1013.60" y="617.90" width="215.70" height="3.00" fill="#e6e6e6" rx="1.5"/>
<circle cx="1023.40" cy="619.40" r="9.50" fill="url(#thumbg)" />
<text x="1020.47" y="671.70" font-size="17.54" fill="#ffffff" textLength="61.83" lengthAdjust="spacingAndGlyphs">Zoom Y</text>
<rect x="1013.60" y="693.10" width="215.70" height="3.00" fill="#e6e6e6" rx="1.5"/>
<circle cx="1023.40" cy="694.60" r="9.50" fill="url(#thumbg)" />
<text x="1019.83" y="746.70" font-size="18.26" fill="#ffffff" textLength="47.64" lengthAdjust="spacingAndGlyphs">x-Axis</text>
<circle cx="1038.20" cy="770.20" r="8.30" fill="#ffffff" stroke="#9a9a9a" stroke-width="1"/>
<text x="1055.84" y="776.90" font-size="18.55" fill="#ffffff" textLength="66.68" lengthAdjust="spacingAndGlyphs">Samples</text>
<circle cx="1038.20" cy="799.80" r="8.30" fill="#ffffff" stroke="#9a9a9a" stroke-width="1"/>
<text x="1055.29" y="806.50" font-size="17.97" fill="#ffffff" textLength="68.70" lengthAdjust="spacingAndGlyphs">Distance</text>
<circle cx="1038.20" cy="830.40" r="8.30" fill="#ffffff" stroke="#9a9a9a" stroke-width="1"/>
<text x="1056.35" y="836.50" font-size="18.26" fill="#ffffff" textLength="38.75" lengthAdjust="spacingAndGlyphs">Time</text>
<circle cx="1038.20" cy="799.80" r="4.60" fill="#333333" />
<rect x="1368.80" y="449.10" width="16.40" height="354.20" fill="#3c3c3c" />
<line x1="1368.80" y1="449.50" x2="1843.20" y2="449.50" stroke="#9a9a9a" stroke-width="1.0" />
<line x1="1368.80" y1="519.50" x2="1843.20" y2="519.50" stroke="#9a9a9a" stroke-width="1.0" />
<line x1="1368.80" y1="590.50" x2="1843.20" y2="590.50" stroke="#9a9a9a" stroke-width="1.0" />
<line x1="1368.80" y1="661.50" x2="1843.20" y2="661.50" stroke="#9a9a9a" stroke-width="1.0" />
<line x1="1368.80" y1="732.50" x2="1843.20" y2="732.50" stroke="#9a9a9a" stroke-width="1.0" />
<line x1="1368.80" y1="803.50" x2="1843.20" y2="803.50" stroke="#9a9a9a" stroke-width="1.0" />
<line x1="1390.50" y1="449.10" x2="1390.50" y2="803.30" stroke="#9a9a9a" stroke-width="1.0" />
<line x1="1422.50" y1="449.10" x2="1422.50" y2="803.30" stroke="#9a9a9a" stroke-width="1.0" />
<line x1="1454.50" y1="449.10" x2="1454.50" y2="803.30" stroke="#9a9a9a" stroke-width="1.0" />
<line x1="1485.50" y1="449.10" x2="1485.50" y2="803.30" stroke="#9a9a9a" stroke-width="1.0" />
<line x1="1517.50" y1="449.10" x2="1517.50" y2="803.30" stroke="#9a9a9a" stroke-width="1.0" />
<line x1="1549.50" y1="449.10" x2="1549.50" y2="803.30" stroke="#9a9a9a" stroke-width="1.0" />
<line x1="1581.50" y1="449.10" x2="1581.50" y2="803.30" stroke="#9a9a9a" stroke-width="1.0" />
<line x1="1612.50" y1="449.10" x2="1612.50" y2="803.30" stroke="#9a9a9a" stroke-width="1.0" />
<line x1="1644.50" y1="449.10" x2="1644.50" y2="803.30" stroke="#9a9a9a" stroke-width="1.0" />
<line x1="1676.50" y1="449.10" x2="1676.50" y2="803.30" stroke="#9a9a9a" stroke-width="1.0" />
<line x1="1708.50" y1="449.10" x2="1708.50" y2="803.30" stroke="#9a9a9a" stroke-width="1.0" />
<line x1="1740.50" y1="449.10" x2="1740.50" y2="803.30" stroke="#9a9a9a" stroke-width="1.0" />
<line x1="1771.50" y1="449.10" x2="1771.50" y2="803.30" stroke="#9a9a9a" stroke-width="1.0" />
<line x1="1803.50" y1="449.10" x2="1803.50" y2="803.30" stroke="#9a9a9a" stroke-width="1.0" />
<line x1="1835.50" y1="449.10" x2="1835.50" y2="803.30" stroke="#9a9a9a" stroke-width="1.0" />
<line x1="1368.80" y1="449.00" x2="1844.00" y2="449.00" stroke="#a0a0a0" stroke-width="2" />
<line x1="1843.00" y1="448.00" x2="1843.00" y2="804.00" stroke="#a0a0a0" stroke-width="2" />
<line x1="1368.80" y1="803.50" x2="1844.00" y2="803.50" stroke="#a0a0a0" stroke-width="1.5" />
<polyline points="1370.0,792.6 1370.4,780.1 1370.8,770.7 1371.2,754.8 1371.6,793.6 1372.0,740.9 1372.4,728.1 1372.8,738.3 1373.2,761.4 1373.6,738.3 1374.0,745.2 1374.4,740.2 1374.8,732.2 1375.2,735.2 1375.6,765.3 1376.0,723.4 1376.4,744.2 1376.8,730.4 1377.2,724.1 1377.6,756.2 1378.0,734.1 1378.4,763.7 1378.8,765.2 1379.2,744.6 1379.6,724.1 1380.0,752.4 1380.4,759.7 1380.8,747.1 1381.2,753.2 1381.6,754.6 1382.0,750.4 1382.4,757.8 1382.8,725.4 1383.2,727.6 1383.6,744.8 1384.0,728.2 1384.4,740.5 1384.8,723.6 1385.2,725.1 1385.6,733.0 1386.0,710.3 1386.4,716.8 1386.8,693.6 1387.2,700.6 1387.6,705.0 1388.0,705.6 1388.4,663.3 1388.8,655.3 1389.2,670.5 1389.6,627.0 1390.0,627.1 1390.4,649.3 1390.8,661.8 1391.2,674.7 1391.6,667.2 1392.0,687.8 1392.4,691.8 1392.8,681.8 1393.2,699.4 1393.6,702.2 1394.0,680.5 1394.4,660.5 1394.8,637.3 1395.2,601.1 1395.6,647.8 1396.0,668.5 1396.4,665.0 1396.8,671.1 1397.2,697.4 1397.6,696.1 1398.0,691.4 1398.4,708.3 1398.8,717.4 1399.2,743.6 1399.6,711.5 1400.0,722.7 1400.4,727.0 1400.8,741.5 1401.2,729.1 1401.6,721.1 1402.0,734.6 1402.4,736.4 1402.8,748.7 1403.2,737.6 1403.6,754.9 1404.0,728.2 1404.4,734.6 1404.8,745.2 1405.2,750.4 1405.6,717.6 1406.0,782.7 1406.4,769.5 1406.8,741.3 1407.2,731.6 1407.6,776.9 1408.0,744.8 1408.4,728.5 1408.8,736.4 1409.2,744.7 1409.6,756.4 1410.0,746.1 1410.4,766.4 1410.8,751.1 1411.2,785.9 1411.6,731.6 1412.0,790.7 1412.4,739.9 1412.8,748.2 1413.2,763.5 1413.6,737.8 1414.0,726.9 1414.4,753.4 1414.8,765.8 1415.2,753.4 1415.6,770.9 1416.0,743.3 1416.4,740.9 1416.8,735.1 1417.2,721.4 1417.6,749.7 1418.0,742.5 1418.4,752.1 1418.8,731.0 1419.2,733.1 1419.6,725.5 1420.0,756.5 1420.4,740.3 1420.8,722.7 1421.2,726.4 1421.6,725.0 1422.0,719.5 1422.4,714.4 1422.8,701.8 1423.2,710.9 1423.6,691.4 1424.0,678.5 1424.4,642.4 1424.8,646.6 1425.2,686.3 1425.6,694.2 1426.0,679.7 1426.4,719.4 1426.8,715.0 1427.2,730.4 1427.6,715.8 1428.0,729.3 1428.4,727.7 1428.8,752.7 1429.2,715.5 1429.6,742.8 1430.0,748.0 1430.4,760.2 1430.8,736.3 1431.2,739.3 1431.6,741.0 1432.0,745.7 1432.4,760.0 1432.8,781.1 1433.2,767.7 1433.6,749.2 1434.0,776.4 1434.4,724.0 1434.8,779.3 1435.2,755.5 1435.6,741.2 1436.0,736.9 1436.4,740.6 1436.8,739.2 1437.2,780.8 1437.6,770.9 1438.0,740.7 1438.4,745.9 1438.8,741.0 1439.2,716.9 1439.6,759.5 1440.0,719.5 1440.4,753.7 1440.8,737.9 1441.2,764.1 1441.6,726.1 1442.0,737.8 1442.4,792.7 1442.8,749.9 1443.2,777.0 1443.6,747.7 1444.0,752.2 1444.4,761.9 1444.8,780.9 1445.2,764.4 1445.6,768.3 1446.0,782.8 1446.4,754.9 1446.8,745.5 1447.2,722.4 1447.6,771.9 1448.0,734.7 1448.4,743.9 1448.8,723.7 1449.2,722.7 1449.6,727.9 1450.0,701.0 1450.4,707.0 1450.8,687.4 1451.2,678.2 1451.6,727.6 1452.0,721.1 1452.4,739.9 1452.8,731.7 1453.2,688.0 1453.6,717.8 1454.0,720.6 1454.4,747.2 1454.8,726.6 1455.2,749.4 1455.6,761.6 1456.0,763.1 1456.4,721.3 1456.8,744.2 1457.2,768.8 1457.6,766.4 1458.0,743.4 1458.4,728.4 1458.8,760.7 1459.2,741.3 1459.6,738.2 1460.0,761.8 1460.4,754.0 1460.8,757.0 1461.2,739.5 1461.6,763.9 1462.0,756.0 1462.4,739.6 1462.8,761.0 1463.2,726.9 1463.6,763.3 1464.0,710.4 1464.4,743.6 1464.8,749.3 1465.2,746.0 1465.6,714.5 1466.0,734.4 1466.4,757.1 1466.8,715.9 1467.2,730.1 1467.6,729.2 1468.0,738.6 1468.4,723.0 1468.8,719.0 1469.2,750.3 1469.6,730.0 1470.0,734.4 1470.4,721.3 1470.8,735.4 1471.2,723.1 1471.6,731.1 1472.0,730.1 1472.4,709.3 1472.8,719.7 1473.2,707.9 1473.6,722.3 1474.0,707.1 1474.4,723.8 1474.8,708.5 1475.2,706.3 1475.6,692.2 1476.0,693.9 1476.4,694.9 1476.8,681.3 1477.2,685.2 1477.6,678.4 1478.0,672.7 1478.4,678.2 1478.8,677.1 1479.2,666.8 1479.6,670.8 1480.0,658.1 1480.4,646.1 1480.8,644.1 1481.2,652.3 1481.6,656.6 1482.0,637.8 1482.4,632.3 1482.8,612.5 1483.2,620.9 1483.6,610.7 1484.0,591.4 1484.4,593.6 1484.8,577.8 1485.2,543.0 1485.6,526.7 1486.0,535.9 1486.4,558.4 1486.8,586.4 1487.2,582.7 1487.6,598.6 1488.0,606.2 1488.4,622.3 1488.8,624.4 1489.2,633.0 1489.6,633.9 1490.0,627.8 1490.4,644.4 1490.8,670.8 1491.2,668.2 1491.6,679.0 1492.0,674.8 1492.4,664.4 1492.8,669.8 1493.2,683.9 1493.6,678.1 1494.0,692.2 1494.4,702.3 1494.8,705.2 1495.2,702.2 1495.6,680.8 1496.0,712.8 1496.4,687.9 1496.8,689.5 1497.2,707.9 1497.6,708.8 1498.0,717.1 1498.4,713.0 1498.8,707.9 1499.2,716.9 1499.6,708.4 1500.0,708.3 1500.4,719.2 1500.8,721.2 1501.2,727.2 1501.6,724.6 1502.0,741.8 1502.4,727.4 1502.8,731.2 1503.2,744.1 1503.6,713.7 1504.0,748.4 1504.4,748.9 1504.8,738.2 1505.2,742.2 1505.6,752.4 1506.0,750.2 1506.4,733.2 1506.8,749.6 1507.2,716.7 1507.6,739.1 1508.0,743.5 1508.4,740.8 1508.8,729.3 1509.2,736.5 1509.6,745.2 1510.0,732.9 1510.4,726.2 1510.8,717.1 1511.2,729.8 1511.6,751.4 1512.0,742.2 1512.4,755.6 1512.8,780.1 1513.2,768.0 1513.6,735.9 1514.0,735.8 1514.4,754.8 1514.8,732.1 1515.2,740.5 1515.6,741.2 1516.0,774.2 1516.4,730.9 1516.8,721.1 1517.2,762.8 1517.6,760.3 1518.0,775.3 1518.4,722.2 1518.8,774.9 1519.2,763.5 1519.6,727.5 1520.0,753.4 1520.4,754.8 1520.8,787.8 1521.2,751.2 1521.6,743.5 1522.0,732.3 1522.4,739.5 1522.8,743.6 1523.2,779.2 1523.6,751.3 1524.0,731.1 1524.4,792.2 1524.8,724.7 1525.2,749.4 1525.6,757.6 1526.0,742.3 1526.4,732.3 1526.8,779.1 1527.2,737.2 1527.6,769.6 1528.0,784.4 1528.4,754.7 1528.8,736.2 1529.2,743.5 1529.6,749.2 1530.0,728.1 1530.4,773.9 1530.8,747.8 1531.2,754.1 1531.6,732.1 1532.0,739.7 1532.4,729.9 1532.8,725.2 1533.2,697.5 1533.6,681.6 1534.0,712.1 1534.4,748.4 1534.8,740.1 1535.2,733.9 1535.6,754.1 1536.0,740.2 1536.4,750.1 1536.8,759.4 1537.2,722.2 1537.6,738.6 1538.0,771.9 1538.4,725.8 1538.8,725.2 1539.2,756.7 1539.6,724.7 1540.0,737.9 1540.4,742.8 1540.8,727.8 1541.2,767.8 1541.6,744.2 1542.0,774.5 1542.4,730.6 1542.8,771.3 1543.2,733.5 1543.6,747.1 1544.0,769.9 1544.4,753.8 1544.8,747.9 1545.2,736.4 1545.6,746.6 1546.0,734.0 1546.4,748.7 1546.8,748.7 1547.2,740.5 1547.6,762.1 1548.0,778.4 1548.4,773.2 1548.8,725.8 1549.2,762.3 1549.6,739.6 1550.0,770.2 1550.4,807.2 1550.8,733.3 1551.2,760.8 1551.6,737.6 1552.0,753.2 1552.4,739.9 1552.8,767.0 1553.2,714.2 1553.6,787.0 1554.0,738.2 1554.4,727.8 1554.8,712.2 1555.2,779.9 1555.6,807.6 1556.0,805.6 1556.4,790.1 1556.8,766.9 1557.2,736.2 1557.6,751.5 1558.0,737.5 1558.4,757.6 1558.8,801.2 1559.2,748.9 1559.6,747.1 1560.0,757.3 1560.4,767.2 1560.8,784.1 1561.2,754.7 1561.6,741.6 1562.0,735.4 1562.4,781.0 1562.8,757.3 1563.2,748.0 1563.6,779.6 1564.0,736.8 1564.4,731.9 1564.8,730.5 1565.2,776.7 1565.6,732.5 1566.0,725.2 1566.4,745.3 1566.8,770.9 1567.2,724.6 1567.6,740.8 1568.0,731.0 1568.4,757.7 1568.8,745.7 1569.2,781.0 1569.6,738.9 1570.0,715.7 1570.4,757.5 1570.8,807.4 1571.2,756.1 1571.6,763.8 1572.0,735.8 1572.4,769.6 1572.8,807.6 1573.2,782.9 1573.6,732.2 1574.0,753.1 1574.4,755.6 1574.8,795.0 1575.2,725.4 1575.6,771.9 1576.0,791.5 1576.4,735.2 1576.8,741.6 1577.2,730.8 1577.6,734.7 1578.0,723.4 1578.4,790.4 1578.8,766.4 1579.2,807.6 1579.6,730.7 1580.0,762.9 1580.4,795.0 1580.8,761.7 1581.2,759.6 1581.6,741.2 1582.0,744.3 1582.4,737.9 1582.8,739.3 1583.2,782.2 1583.6,715.7 1584.0,755.1 1584.4,742.1 1584.8,756.6 1585.2,746.1 1585.6,794.3 1586.0,800.4 1586.4,768.8 1586.8,725.8 1587.2,715.9 1587.6,781.4 1588.0,738.6 1588.4,743.8 1588.8,728.9 1589.2,743.9 1589.6,735.1 1590.0,734.8 1590.4,740.4 1590.8,727.8 1591.2,737.6 1591.6,714.2 1592.0,753.5 1592.4,747.6 1592.8,741.5 1593.2,756.9 1593.6,759.4 1594.0,775.2 1594.4,753.4 1594.8,760.0 1595.2,730.3 1595.6,729.6 1596.0,807.6 1596.4,772.8 1596.8,753.6 1597.2,736.2 1597.6,725.0 1598.0,739.0 1598.4,752.8 1598.8,758.3 1599.2,723.2 1599.6,710.9 1600.0,782.0 1600.4,754.5 1600.8,748.0 1601.2,746.5 1601.6,754.6 1602.0,725.1 1602.4,734.9 1602.8,737.4 1603.2,749.0 1603.6,734.7 1604.0,737.2 1604.4,720.7 1604.8,731.0 1605.2,787.6 1605.6,743.1 1606.0,807.6 1606.4,786.9 1606.8,751.7 1607.2,725.3 1607.6,734.3 1608.0,718.7 1608.4,725.3 1608.8,730.6 1609.2,746.6 1609.6,740.6 1610.0,807.6 1610.4,800.4 1610.8,751.8 1611.2,751.3 1611.6,797.8 1612.0,777.2 1612.4,750.7 1612.8,758.9 1613.2,790.7 1613.6,753.7 1614.0,744.7 1614.4,782.9 1614.8,807.6 1615.2,776.8 1615.6,764.3 1616.0,749.2 1616.4,758.7 1616.8,730.3 1617.2,731.2 1617.6,734.8 1618.0,776.2 1618.4,755.8 1618.8,778.1 1619.2,784.3 1619.6,737.8 1620.0,728.6 1620.4,790.7 1620.8,742.1 1621.2,738.0 1621.6,736.3 1622.0,748.4 1622.4,755.3 1622.8,761.9 1623.2,747.9 1623.6,761.9 1624.0,755.0 1624.4,726.5 1624.8,748.1 1625.2,732.2 1625.6,783.6 1626.0,807.6 1626.4,752.3 1626.8,705.2 1627.2,771.8 1627.6,729.9 1628.0,784.5 1628.4,745.3 1628.8,788.2 1629.2,752.6 1629.6,807.6 1630.0,807.6 1630.4,772.5 1630.8,752.4 1631.2,729.5 1631.6,746.6 1632.0,794.8 1632.4,720.8 1632.8,803.3 1633.2,786.0 1633.6,725.4 1634.0,778.0 1634.4,754.3 1634.8,764.7 1635.2,764.9 1635.6,746.6 1636.0,731.9 1636.4,738.3 1636.8,787.3 1637.2,720.9 1637.6,751.6 1638.0,768.0 1638.4,787.5 1638.8,718.0 1639.2,790.4 1639.6,769.5 1640.0,753.5 1640.4,740.6 1640.8,731.9 1641.2,749.7 1641.6,736.2 1642.0,754.7 1642.4,728.6 1642.8,732.5 1643.2,768.9 1643.6,736.6 1644.0,746.2 1644.4,736.0 1644.8,715.2 1645.2,759.6 1645.6,753.4 1646.0,759.6 1646.4,707.0 1646.8,772.1 1647.2,752.9 1647.6,722.7 1648.0,770.5 1648.4,773.7 1648.8,796.4 1649.2,764.0 1649.6,736.9 1650.0,745.4 1650.4,784.5 1650.8,742.2 1651.2,730.6 1651.6,741.0 1652.0,764.9 1652.4,737.8 1652.8,745.7 1653.2,789.4 1653.6,747.8 1654.0,805.1 1654.4,738.2 1654.8,788.3 1655.2,758.5 1655.6,741.7 1656.0,771.5 1656.4,741.0 1656.8,777.8 1657.2,751.4 1657.6,765.6 1658.0,801.4 1658.4,786.0 1658.8,739.7 1659.2,750.3 1659.6,749.5 1660.0,761.6 1660.4,785.6 1660.8,731.9 1661.2,755.6 1661.6,752.2 1662.0,745.0 1662.4,721.3 1662.8,764.8 1663.2,721.5 1663.6,780.2 1664.0,747.5 1664.4,800.1 1664.8,739.6 1665.2,807.6 1665.6,761.3 1666.0,807.6 1666.4,775.0 1666.8,709.0 1667.2,807.6 1667.6,772.0 1668.0,777.4 1668.4,760.7 1668.8,769.6 1669.2,718.5 1669.6,796.7 1670.0,740.2 1670.4,771.2 1670.8,718.7 1671.2,799.3 1671.6,736.0 1672.0,739.5 1672.4,764.9 1672.8,764.4 1673.2,740.2 1673.6,807.6 1674.0,776.1 1674.4,750.5 1674.8,739.6 1675.2,759.5 1675.6,748.1 1676.0,710.5 1676.4,764.1 1676.8,735.0 1677.2,746.1 1677.6,744.2 1678.0,732.9 1678.4,751.5 1678.8,761.0 1679.2,729.3 1679.6,757.6 1680.0,749.0 1680.4,743.6 1680.8,743.4 1681.2,722.1 1681.6,768.5 1682.0,727.6 1682.4,796.0 1682.8,746.2 1683.2,731.5 1683.6,769.1 1684.0,755.2 1684.4,769.7 1684.8,733.7 1685.2,728.4 1685.6,738.5 1686.0,738.6 1686.4,754.4 1686.8,770.5 1687.2,750.3 1687.6,715.6 1688.0,754.0 1688.4,760.2 1688.8,765.3 1689.2,800.8 1689.6,728.2 1690.0,748.7 1690.4,759.9 1690.8,741.5 1691.2,766.8 1691.6,726.7 1692.0,735.8 1692.4,753.3 1692.8,727.1 1693.2,775.1 1693.6,745.3 1694.0,755.4 1694.4,734.8 1694.8,741.1 1695.2,734.4 1695.6,777.7 1696.0,731.2 1696.4,774.6 1696.8,737.3 1697.2,781.0 1697.6,752.6 1698.0,722.6 1698.4,729.1 1698.8,763.9 1699.2,758.6 1699.6,778.8 1700.0,745.3 1700.4,761.9 1700.8,726.7 1701.2,714.6 1701.6,807.6 1702.0,748.8 1702.4,718.8 1702.8,749.1 1703.2,725.6 1703.6,765.7 1704.0,728.6 1704.4,762.8 1704.8,730.2 1705.2,721.6 1705.6,747.7 1706.0,719.4 1706.4,807.6 1706.8,754.4 1707.2,771.5 1707.6,725.2 1708.0,756.5 1708.4,732.7 1708.8,730.2 1709.2,739.7 1709.6,754.7 1710.0,718.4 1710.4,747.2 1710.8,756.9 1711.2,738.3 1711.6,775.7 1712.0,752.6 1712.4,730.7 1712.8,760.8 1713.2,729.4 1713.6,724.3 1714.0,764.5 1714.4,759.5 1714.8,737.6 1715.2,726.8 1715.6,717.2 1716.0,775.1 1716.4,777.1 1716.8,754.6 1717.2,750.5 1717.6,783.0 1718.0,749.3 1718.4,749.2 1718.8,738.8 1719.2,776.9 1719.6,734.6 1720.0,738.7 1720.4,750.4 1720.8,761.4 1721.2,727.0 1721.6,784.9 1722.0,741.9 1722.4,752.3 1722.8,807.6 1723.2,757.1 1723.6,720.1 1724.0,764.1 1724.4,766.7 1724.8,736.8 1725.2,771.5 1725.6,760.9 1726.0,754.5 1726.4,765.7 1726.8,762.8 1727.2,723.1 1727.6,725.1 1728.0,735.3 1728.4,754.0 1728.8,719.2 1729.2,733.9 1729.6,769.6 1730.0,754.6 1730.4,782.7 1730.8,717.4 1731.2,785.8 1731.6,736.9 1732.0,712.7 1732.4,784.5 1732.8,755.8 1733.2,712.9 1733.6,753.9 1734.0,736.8 1734.4,730.4 1734.8,740.5 1735.2,730.6 1735.6,748.4 1736.0,754.0 1736.4,757.9 1736.8,778.0 1737.2,738.3 1737.6,775.4 1738.0,743.4 1738.4,780.3 1738.8,778.5 1739.2,738.7 1739.6,783.4 1740.0,716.1 1740.4,734.7 1740.8,750.8 1741.2,728.2 1741.6,738.3 1742.0,796.6 1742.4,758.9 1742.8,758.0 1743.2,744.7 1743.6,769.4 1744.0,765.6 1744.4,755.9 1744.8,761.7 1745.2,727.7 1745.6,748.6 1746.0,744.6 1746.4,780.3 1746.8,767.7 1747.2,745.8 1747.6,753.0 1748.0,754.3 1748.4,746.1 1748.8,745.0 1749.2,735.0 1749.6,748.1 1750.0,741.8 1750.4,798.2 1750.8,726.8 1751.2,737.4 1751.6,741.5 1752.0,807.6 1752.4,786.6 1752.8,768.2 1753.2,747.9 1753.6,728.6 1754.0,731.2 1754.4,775.6 1754.8,771.2 1755.2,716.5 1755.6,751.0 1756.0,757.4 1756.4,728.0 1756.8,760.6 1757.2,737.4 1757.6,718.3 1758.0,745.2 1758.4,752.4 1758.8,742.7 1759.2,731.9 1759.6,760.3 1760.0,737.2 1760.4,746.0 1760.8,741.7 1761.2,738.7 1761.6,737.9 1762.0,779.0 1762.4,725.9 1762.8,805.7 1763.2,750.6 1763.6,737.0 1764.0,770.7 1764.4,732.7 1764.8,792.1 1765.2,737.3 1765.6,725.5 1766.0,741.8 1766.4,743.3 1766.8,780.4 1767.2,723.6 1767.6,778.2 1768.0,772.7 1768.4,748.3 1768.8,743.8 1769.2,749.0 1769.6,721.4 1770.0,750.2 1770.4,727.6 1770.8,736.9 1771.2,746.1 1771.6,794.2 1772.0,761.6 1772.4,708.7 1772.8,739.9 1773.2,759.7 1773.6,736.9 1774.0,765.9 1774.4,752.5 1774.8,768.9 1775.2,732.6 1775.6,753.9 1776.0,802.1 1776.4,748.8 1776.8,740.3 1777.2,742.9 1777.6,752.3 1778.0,741.7 1778.4,745.4 1778.8,735.9 1779.2,779.2 1779.6,766.5 1780.0,740.1 1780.4,723.1 1780.8,730.9 1781.2,735.4 1781.6,743.0 1782.0,723.0 1782.4,727.6 1782.8,690.4 1783.2,708.8 1783.6,688.2 1784.0,652.2 1784.4,624.6 1784.8,595.8 1785.2,664.0 1785.6,679.5 1786.0,687.9 1786.4,699.6 1786.8,707.6 1787.2,725.4 1787.6,715.2 1788.0,726.8 1788.4,750.2 1788.8,733.4 1789.2,746.3 1789.6,735.0 1790.0,718.8 1790.4,767.9 1790.8,745.2 1791.2,735.8 1791.6,757.6 1792.0,744.9 1792.4,752.9 1792.8,771.3 1793.2,730.7 1793.6,733.4 1794.0,765.7 1794.4,743.3 1794.8,741.7 1795.2,720.3 1795.6,741.5 1796.0,745.9 1796.4,777.3 1796.8,740.6 1797.2,755.9 1797.6,732.6 1798.0,765.5 1798.4,736.9 1798.8,730.6 1799.2,770.7 1799.6,807.6 1800.0,753.7 1800.4,737.8 1800.8,736.0 1801.2,738.8 1801.6,757.1 1802.0,742.8 1802.4,754.1 1802.8,732.4 1803.2,726.3 1803.6,754.5 1804.0,725.4 1804.4,760.9 1804.8,741.2 1805.2,724.8 1805.6,804.0 1806.0,719.4 1806.4,748.8 1806.8,807.6 1807.2,769.5 1807.6,753.3 1808.0,781.4 1808.4,755.4 1808.8,753.5 1809.2,792.5 1809.6,730.1 1810.0,766.1 1810.4,749.0 1810.8,728.4 1811.2,735.5 1811.6,760.7 1812.0,710.9 1812.4,767.1 1812.8,763.6 1813.2,757.0 1813.6,726.8 1814.0,749.8 1814.4,757.1 1814.8,735.4 1815.2,760.8 1815.6,752.4 1816.0,740.5 1816.4,768.3 1816.8,751.3 1817.2,747.8 1817.6,729.3 1818.0,748.9 1818.4,733.2 1818.8,730.9 1819.2,762.5 1819.6,771.8 1820.0,733.6 1820.4,749.8 1820.8,748.5 1821.2,777.5 1821.6,755.9 1822.0,754.8 1822.4,744.7 1822.8,753.4 1823.2,720.4 1823.6,747.6 1824.0,750.1 1824.4,746.3 1824.8,765.0 1825.2,749.2 1825.6,727.6 1826.0,745.7 1826.4,715.7 1826.8,728.1 1827.2,754.4 1827.6,752.9 1828.0,747.8 1828.4,807.6 1828.8,755.9 1829.2,807.6 1829.6,747.3 1830.0,752.3 1830.4,748.6 1830.8,713.4 1831.2,757.1 1831.6,740.0 1832.0,729.1 1832.4,703.0 1832.8,665.5 1833.2,660.8 1833.6,695.2 1834.0,726.0 1834.4,747.8 1834.8,734.2 1835.2,729.1 1835.6,748.7 1836.0,760.9 1836.4,781.4 1836.8,750.0 1837.2,770.9 1837.6,729.3 1838.0,737.3 1838.4,800.5 1838.8,727.3 1839.2,743.7 1839.6,749.2 1840.0,730.2 1840.4,778.6 1840.8,765.2 1841.2,750.9 1841.6,754.3 1842.0,762.9 1842.4,754.5" fill="none" stroke="#f0f0f0" stroke-width="1.0" stroke-linejoin="bevel"/>
<line x1="1394.10" y1="609.60" x2="1394.10" y2="700.00" stroke="#f0f0f0" stroke-width="1.6" />
<line x1="1423.20" y1="636.00" x2="1423.20" y2="730.00" stroke="#f0f0f0" stroke-width="1.6" />
<line x1="1485.90" y1="530.10" x2="1485.90" y2="640.00" stroke="#f0f0f0" stroke-width="1.8" />
<line x1="1786.00" y1="590.00" x2="1786.00" y2="700.00" stroke="#f0f0f0" stroke-width="1.4" />
<line x1="1834.00" y1="637.00" x2="1834.00" y2="720.00" stroke="#f0f0f0" stroke-width="1.4" />
<line x1="1385.20" y1="449.10" x2="1385.20" y2="803.30" stroke="#f0f020" stroke-width="1" stroke-dasharray="1.5,1.5"/>
<line x1="1385.30" y1="568.60" x2="1385.30" y2="680.00" stroke="#e8e880" stroke-width="1.6" />
<line x1="1368.80" y1="449.10" x2="1368.80" y2="803.30" stroke="#e04040" stroke-width="2" />
<circle cx="1385.30" cy="568.60" r="5.60" fill="#ff1010" />
<circle cx="1394.10" cy="649.30" r="5.60" fill="#20a8e8" />
<circle cx="1423.20" cy="635.90" r="5.60" fill="#7030d8" />
<circle cx="1485.90" cy="558.10" r="5.60" fill="#ffee00" />
<text x="1311.38" y="456.10" font-size="19.86" fill="#ffffff" textLength="46.82" lengthAdjust="spacingAndGlyphs">-20.0</text>
<text x="1311.38" y="526.94" font-size="19.86" fill="#ffffff" textLength="46.82" lengthAdjust="spacingAndGlyphs">-30.0</text>
<text x="1311.38" y="597.78" font-size="19.86" fill="#ffffff" textLength="46.82" lengthAdjust="spacingAndGlyphs">-40.0</text>
<text x="1311.38" y="668.62" font-size="19.86" fill="#ffffff" textLength="46.82" lengthAdjust="spacingAndGlyphs">-50.0</text>
<text x="1311.38" y="739.46" font-size="19.86" fill="#ffffff" textLength="46.82" lengthAdjust="spacingAndGlyphs">-60.0</text>
<text x="1311.38" y="810.30" font-size="19.86" fill="#ffffff" textLength="46.82" lengthAdjust="spacingAndGlyphs">-70.0</text>
<text x="1379.08" y="824.90" font-size="13.86" fill="#ffffff" textLength="22.63" lengthAdjust="spacingAndGlyphs">-60</text>
<text x="1410.87" y="844.70" font-size="14.43" fill="#ffffff" textLength="22.63" lengthAdjust="spacingAndGlyphs">-40</text>
<text x="1442.66" y="824.90" font-size="13.86" fill="#ffffff" textLength="22.63" lengthAdjust="spacingAndGlyphs">-20</text>
<text x="1481.42" y="844.70" font-size="14.43" fill="#ffffff" textLength="8.71" lengthAdjust="spacingAndGlyphs">0</text>
<text x="1508.74" y="824.90" font-size="13.86" fill="#ffffff" textLength="17.42" lengthAdjust="spacingAndGlyphs">20</text>
<text x="1540.77" y="844.70" font-size="14.43" fill="#ffffff" textLength="17.42" lengthAdjust="spacingAndGlyphs">40</text>
<text x="1572.32" y="824.90" font-size="13.86" fill="#ffffff" textLength="17.42" lengthAdjust="spacingAndGlyphs">60</text>
<text x="1604.19" y="844.70" font-size="14.43" fill="#ffffff" textLength="17.42" lengthAdjust="spacingAndGlyphs">80</text>
<text x="1631.44" y="824.90" font-size="13.86" fill="#ffffff" textLength="26.12" lengthAdjust="spacingAndGlyphs">100</text>
<text x="1663.23" y="844.70" font-size="14.43" fill="#ffffff" textLength="26.12" lengthAdjust="spacingAndGlyphs">120</text>
<text x="1695.02" y="824.90" font-size="13.86" fill="#ffffff" textLength="26.12" lengthAdjust="spacingAndGlyphs">140</text>
<text x="1726.81" y="844.70" font-size="14.43" fill="#ffffff" textLength="26.12" lengthAdjust="spacingAndGlyphs">160</text>
<text x="1758.60" y="824.90" font-size="13.86" fill="#ffffff" textLength="26.12" lengthAdjust="spacingAndGlyphs">180</text>
<text x="1790.55" y="844.70" font-size="14.43" fill="#ffffff" textLength="26.12" lengthAdjust="spacingAndGlyphs">200</text>
<text x="1822.34" y="824.90" font-size="13.86" fill="#ffffff" textLength="26.12" lengthAdjust="spacingAndGlyphs">220</text>
<text x="1494.89" y="872.20" font-size="19.28" fill="#ffffff" textLength="221.10" lengthAdjust="spacingAndGlyphs">Distance Difference (km)</text>
<text transform="translate(1289.00,695.21) rotate(-90)" x="0" y="0" font-size="20.43" fill="#ffffff" textLength="137.44" lengthAdjust="spacingAndGlyphs">Magnitude (dB)</text>
</svg></body></html>
